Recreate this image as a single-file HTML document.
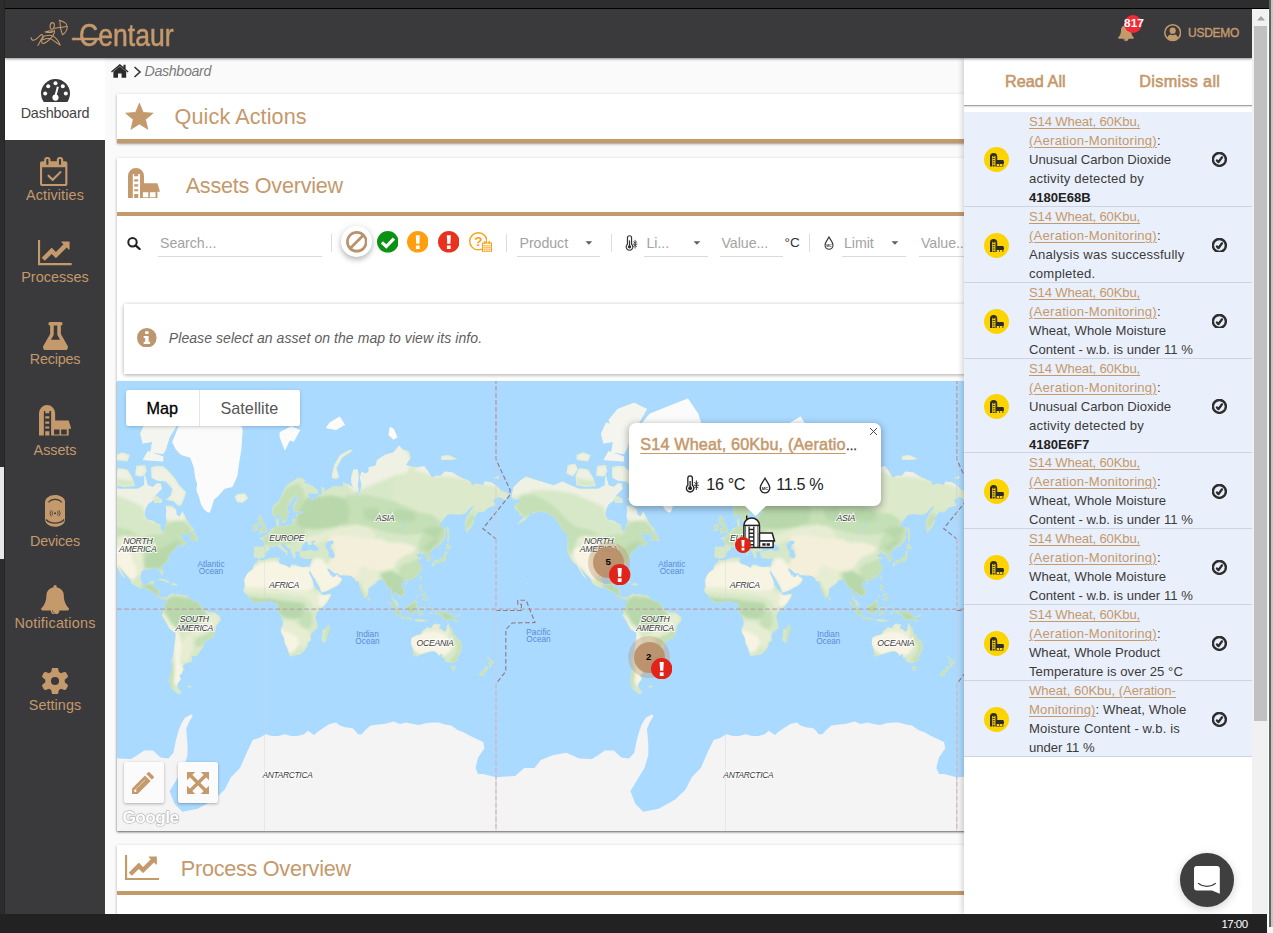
<!DOCTYPE html><html><head><meta charset="utf-8"><title>Centaur Dashboard</title><style>
*{box-sizing:border-box}
html,body{margin:0;padding:0}
body{width:1273px;height:933px;overflow:hidden;position:relative;background:#fafafa;font-family:"Liberation Sans",sans-serif;color:#333}
.a{position:absolute}
.t{position:absolute;white-space:nowrap;line-height:1;transform-origin:0 0}
.tan{color:#c4996c}
.card{position:absolute;background:#fff;box-shadow:0 1px 3px rgba(0,0,0,.28),0 1px 1px rgba(0,0,0,.12)}
.bar{position:absolute;left:0;right:0;bottom:0;height:4px;background:#c4996c}
.sb{position:absolute;left:0;width:100px;text-align:center;font-size:14.4px;color:#c4996c;line-height:1;letter-spacing:-.1px}
.ul{position:absolute;height:1px;background:#dadada}
.sep{position:absolute;width:1px;background:#dcdcdc}
.ph{color:#a3a3a3}
.n{position:absolute;left:0;width:288.5px;background:#eaf0fb;border-bottom:1px solid #cdd3df}
.n .tx{position:absolute;left:65.5px;top:0;width:175px;font-size:13.1px;line-height:19px;color:#3a3a3a;letter-spacing:.12px;white-space:nowrap}
.n .tx u{color:#c4996c;text-decoration:underline;text-decoration-thickness:1px;text-underline-offset:2px}
.n .tx b{font-weight:700;color:#222}
.yc{position:absolute;left:20.5px;width:25px;height:25px;border-radius:50%;background:#fdd400}
</style></head><body>
<div class="a" style="left:105px;top:58px;width:860px;height:856px;background:#fafafa"></div>
<svg class="a" style="left:111.3px;top:64px" width="17.6" height="14" viewBox="0 0 17.6 14"><path fill="#2b2b2b" d="M8.8 2.2 15.2 7.6V13.3a.5.5 0 0 1-.5.5H10.600V9.600H7V13.800H2.900a.5.5 0 0 1-.5-.5V7.600z"/><path fill="#2b2b2b" d="M8.800 0 12.500 3.100V.8h2.100V4.900L17.600 7.400l-.9 1.100L8.800 1.900.9 8.500 0 7.400z"/></svg>
<svg class="a" style="left:133px;top:66px" width="9" height="12" viewBox="0 0 9 12"><path d="M1.5 1 L7 6 L1.5 11" fill="none" stroke="#333" stroke-width="1.6"/></svg>
<div class="t" style="left:144.5px;top:64.4px;font-size:14.2px;font-style:italic;color:#7b7b7b;letter-spacing:-.32px">Dashboard</div>
<div class="card" style="left:117px;top:94px;width:900px;height:49px"><div class="bar"></div></div>
<svg class="a" style="left:124.5px;top:101.5px" width="29" height="28" viewBox="0 0 29 28"><polygon fill="#c4996c" stroke="#c4996c" stroke-width=".8" stroke-linejoin="round" points="14.40,1.20 18.17,10.42 28.10,11.15 20.49,17.58 22.86,27.25 14.40,22.01 5.94,27.25 8.31,17.58 0.70,11.15 10.63,10.42"/></svg>
<div class="t tan" style="left:174.6px;top:106.3px;font-size:21.6px;letter-spacing:.1px">Quick Actions</div>
<div class="card" style="left:117px;top:158px;width:900px;height:673px"></div>
<div class="a" style="left:117px;top:212px;width:900px;height:4px;background:#c4996c"></div>
<svg class="a" style="left:128px;top:168px;" width="32" height="30.3" viewBox="0 0 32 30" preserveAspectRatio="none"><path fill="#c4996c" d="M0 30V8a8 8 0 0 1 16 0v7.2h13.4L32 23.4h-2.6V30H12V6H10.2v2.2H6.2V6H4.8v24z M6.2 11.1h4v2.2h-4z M6.2 16.2h4v2.1h-4z M6.2 21h4v2.1h-4z M6.2 25.8h4V30h-4z"/><path fill="#fff" d="M14.9 24.1h5.4v4.8h-5.4z M21.9 24.1h5.6v4.8h-5.6z"/></svg>
<div class="t tan" style="left:185.7px;top:174.5px;font-size:21.6px;letter-spacing:-.24px">Assets Overview</div>
<svg class="a" style="left:127.3px;top:236.6px" width="14" height="13" viewBox="0 0 14 13"><circle cx="5.5" cy="5.300" r="4.200" fill="none" stroke="#222" stroke-width="2"/><path d="M8.600 8.300 12.600 12" stroke="#222" stroke-width="2.300" stroke-linecap="round"/></svg>
<div class="t ph" style="left:160px;top:235.9px;font-size:14.2px;letter-spacing:-.05px">Search...</div>
<div class="ul" style="left:158px;top:256px;width:164px"></div>
<div class="sep" style="left:331px;top:234px;height:18px"></div>
<div class="a" style="left:341px;top:226.2px;width:30.6px;height:30.6px;border-radius:50%;background:#fff;box-shadow:0 3px 5px rgba(0,0,0,.2),0 1px 8px rgba(0,0,0,.12)"></div>
<svg class="a" style="left:345.6px;top:231px" width="21.6" height="21.6" viewBox="0 0 21.6 21.6"><circle cx="10.8" cy="10.8" r="9.4" fill="none" stroke="#b9926c" stroke-width="2.7"/><path d="M17.3 4.3 4.3 17.3" stroke="#b9926c" stroke-width="2.7"/></svg>
<svg class="a" style="left:376.6px;top:231px" width="21.6" height="21.6" viewBox="0 0 21.6 21.6"><circle cx="10.8" cy="10.8" r="10.8" fill="#0b9212"/><path d="M4.9 11.300 9.300 15.500 16.900 7.600" fill="none" stroke="#fff" stroke-width="3.1"/></svg>
<svg class="a" style="left:406.8px;top:231px" width="21.6" height="21.6" viewBox="0 0 21.6 21.6"><circle cx="10.8" cy="10.8" r="10.8" fill="#ff9e0f"/><path d="M8.8 4.2h4l-.4 8.600H9.200z M8.900 14.400h3.800v3.500H8.900z" fill="#fff"/></svg>
<svg class="a" style="left:437.6px;top:231px" width="21.6" height="21.6" viewBox="0 0 21.6 21.6"><circle cx="10.8" cy="10.8" r="10.8" fill="#e8321e"/><path d="M8.8 4.2h4l-.4 8.600H9.200z M8.900 14.400h3.800v3.500H8.900z" fill="#fff"/></svg>
<svg class="a" style="left:468.7px;top:232.200px" width="18.600" height="18.600" viewBox="0 0 18.600 18.600"><circle cx="9.300" cy="9.300" r="8.600" fill="none" stroke="#ff9e0f" stroke-width="1.400"/><text x="9.300" y="14.200" text-anchor="middle" font-family="Liberation Sans, sans-serif" font-weight="700" font-size="13.500" fill="#ff9e0f">?</text></svg>
<svg class="a" style="left:482.3px;top:240.500px" width="10" height="11.400" viewBox="0 0 10 11.400"><rect x=".5" y="2" width="9" height="8.900" fill="#fff" stroke="#ff9e0f" stroke-width="1"/><path d="M.5 4.600h9M.5 6.700h9M.5 8.800h9M2.800 4.600v6.300M5 4.600v6.300M7.200 4.600v6.300" stroke="#ff9e0f" stroke-width=".6" fill="none"/><path d="M2.800 0v3M7.200 0v3" stroke="#ff9e0f" stroke-width="1.300"/></svg>
<div class="sep" style="left:506px;top:234px;height:18px"></div>
<div class="t ph" style="left:519.5px;top:235.9px;font-size:14.2px;letter-spacing:-.05px">Product</div>
<div class="ul" style="left:517px;top:256px;width:83px"></div>
<svg class="a" style="left:585.1px;top:240.8px" width="7.8" height="4.2" viewBox="0 0 9 5"><path d="M0.5 0.3h8L4.5 4.6z" fill="#5f5f5f"/></svg>
<div class="sep" style="left:611px;top:234px;height:18px"></div>
<svg class="a" style="left:624px;top:234.5px" width="14.040000000000001" height="16.200000000000003" viewBox="0 0 13 15"><g fill="none" stroke="#333" stroke-width="1.1"><path d="M3.2 8.6V2.6a1.9 1.9 0 0 1 3.8 0v6a3.1 3.1 0 1 1-3.8 0z"/><path d="M10.3 4.5v8M8.6 6.2l1.7 1.2 1.7-1.2M8.6 10.8l1.7-1.2 1.7 1.2M8.2 8.5h4.2" stroke-width=".8"/></g><circle cx="5.1" cy="11" r="1.6" fill="#333"/><path d="M5.1 5v6" stroke="#333" stroke-width="1.1"/></svg>
<div class="t ph" style="left:646.5px;top:235.9px;font-size:14.2px;letter-spacing:-.05px">Li...</div>
<div class="ul" style="left:644px;top:256px;width:64px"></div>
<svg class="a" style="left:692.6px;top:240.8px" width="7.8" height="4.2" viewBox="0 0 9 5"><path d="M0.5 0.3h8L4.5 4.6z" fill="#5f5f5f"/></svg>
<div class="t ph" style="left:721.5px;top:235.9px;font-size:14.2px;letter-spacing:-.05px">Value...</div>
<div class="ul" style="left:720px;top:256px;width:63px"></div>
<div class="t" style="left:784.6px;top:236px;font-size:13.6px;color:#333">°C</div>
<div class="sep" style="left:809px;top:234px;height:18px"></div>
<svg class="a" style="left:824px;top:236px" width="10.0" height="14.0" viewBox="0 0 10 14"><path d="M5 1C3.4 4 1 6.6 1 9.2a4 4 0 0 0 8 0C9 6.6 6.6 4 5 1z" fill="none" stroke="#333" stroke-width="1.1"/><text x="5" y="11" font-size="3.6" font-family="Liberation Sans, sans-serif" font-weight="700" text-anchor="middle" fill="#333">MC</text></svg>
<div class="t ph" style="left:844px;top:235.9px;font-size:14.2px;letter-spacing:-.05px">Limit</div>
<div class="ul" style="left:842px;top:256px;width:64px"></div>
<svg class="a" style="left:890.6px;top:240.8px" width="7.8" height="4.2" viewBox="0 0 9 5"><path d="M0.5 0.3h8L4.5 4.6z" fill="#5f5f5f"/></svg>
<div class="t ph" style="left:921px;top:235.9px;font-size:14.2px;letter-spacing:-.05px">Value...</div>
<div class="ul" style="left:919px;top:256px;width:63px"></div>
<div class="card" style="left:124px;top:304px;width:880px;height:70px;box-shadow:0 1px 4px rgba(0,0,0,.35)"></div>
<svg class="a" style="left:137.4px;top:327.8px" width="19.6" height="19.6" viewBox="0 0 19.6 19.6"><circle cx="9.800" cy="9.800" r="9.800" fill="#bd966f"/><path fill="#fff" d="M8.200 3.300h3.300v2.700H8.200zM6.700 8h4.900v5.800h1.500v2.100H6.700v-2.100h1.500v-3.700H6.700z"/></svg>
<div class="t" style="left:168.8px;top:330.9px;font-size:14px;font-style:italic;color:#5e5e5e;letter-spacing:.07px">Please select an asset on the map to view its info.</div>
<div class="a" style="left:117px;top:381px;width:900px;height:450px;overflow:hidden;background:#aadaff;box-shadow:0 1px 2px rgba(0,0,0,.3)">
<svg class="a" style="left:0;top:0" width="900" height="450" viewBox="0 0 900 450">
<defs><clipPath id="landclip"><path d="M-66.4 115.8 L-64.5 106.6 L-57.5 99.4 L-51.7 95.5 L-43.4 98.6 L-31.9 102.0 L-24.2 104.2 L-15.2 100.5 L-11.4 102.4 L1.4 107.7 L10.4 107.7 L20.6 107.7 L27.0 104.2 L27.6 92.7 L30.8 104.2 L36.0 105.9 L39.8 102.4 L43.6 102.4 L44.9 107.7 L38.5 114.2 L37.2 118.8 L30.8 123.2 L28.3 128.6 L27.6 133.7 L30.2 138.6 L36.0 139.7 L39.8 142.5 L43.6 143.2 L43.6 147.5 L46.2 151.1 L47.5 149.6 L48.1 144.3 L50.0 140.9 L48.8 134.5 L49.4 129.9 L48.8 124.8 L54.5 124.8 L59.0 128.6 L59.6 133.7 L62.8 135.5 L65.4 130.4 L66.7 132.5 L69.2 137.4 L71.8 142.0 L76.3 147.5 L77.3 149.6 L71.8 153.3 L64.1 153.3 L61.6 155.6 L65.4 155.6 L66.0 159.5 L70.5 162.3 L64.8 165.8 L62.8 163.2 L59.0 165.5 L58.4 168.5 L53.9 171.0 L52.0 175.1 L51.3 179.9 L47.5 182.7 L44.7 185.3 L46.2 191.9 L45.9 194.5 L44.3 194.0 L42.7 190.4 L41.1 187.5 L38.5 187.1 L34.0 187.2 L33.4 189.0 L28.3 188.3 L24.4 190.4 L23.8 194.7 L23.5 198.2 L25.7 203.0 L27.6 204.1 L30.8 203.6 L32.8 201.0 L33.4 200.0 L37.2 199.6 L36.6 203.0 L35.6 207.0 L39.8 207.2 L42.0 208.4 L41.5 213.6 L43.6 216.2 L46.8 215.6 L49.7 216.8 L48.9 218.6 L46.2 218.4 L44.3 217.9 L42.4 217.1 L38.9 214.9 L36.6 211.0 L31.5 209.7 L27.6 206.8 L24.4 207.3 L19.3 205.4 L14.2 202.3 L13.6 198.9 L9.1 194.0 L4.6 189.0 L1.8 185.3 L2.7 187.5 L5.2 191.9 L7.8 196.1 L8.4 197.5 L7.4 197.1 L5.2 194.7 L2.7 191.2 L0.8 187.5 L-1.2 183.8 L-5.6 180.7 L-7.6 176.8 L-10.1 171.8 L-10.8 166.7 L-10.1 160.8 L-11.0 156.8 L-8.8 155.6 L-11.4 152.7 L-15.2 149.6 L-18.4 144.3 L-21.6 138.6 L-25.5 135.0 L-30.6 131.7 L-37.0 130.4 L-40.8 131.2 L-45.3 133.0 L-46.0 128.6 L-48.5 134.5 L-53.6 139.7 L-60.0 143.2 L-58.8 140.9 L-53.6 135.0 L-58.8 134.2 L-58.8 131.2 L-62.6 128.6 L-63.9 125.9 L-62.0 123.2 L-57.5 120.3 L-58.1 118.2 L-63.9 118.8Z M55.2 61.3 L61.6 45.3 L71.8 32.7 L91.0 24.9 L110.2 17.4 L120.4 32.7 L125.6 49.1 L124.3 68.5 L121.7 83.9 L120.4 94.7 L117.9 100.5 L115.3 105.9 L107.6 107.7 L101.2 114.9 L96.8 118.8 L94.8 125.9 L92.9 131.2 L91.0 131.5 L87.2 128.6 L84.0 123.2 L82.0 115.8 L79.5 109.4 L80.1 102.4 L78.2 96.7 L76.9 86.2 L73.1 76.6 L64.1 74.0 L59.0 68.5Z M46.2 85.3 L51.3 89.7 L57.7 96.7 L62.2 104.2 L69.2 111.0 L67.3 117.3 L64.1 124.6 L60.9 124.6 L56.4 120.3 L48.8 118.8 L53.9 114.2 L55.2 107.7 L48.8 100.5 L39.8 99.4 L34.7 96.7 L34.0 86.2 L39.8 84.8Z M33.4 71.3 L46.2 72.9 L48.8 68.5 L52.6 56.2 L61.6 41.4 L69.2 27.9 L56.4 21.8 L39.8 27.9 L30.8 38.9 L36.0 56.2Z M-1.2 104.2 L7.8 105.9 L18.0 104.9 L15.5 96.7 L10.4 88.4 L1.4 87.1 L-2.4 94.7Z M-11.4 92.7 L-5.0 95.5 L0.1 88.4 L-2.4 82.5 L-10.1 83.9Z M-1.2 79.1 L10.4 80.6 L12.9 74.0 L5.2 71.3 L-1.2 74.0Z M25.7 79.1 L46.2 80.6 L46.2 75.6 L30.8 70.2Z M18.0 94.7 L25.7 95.5 L29.6 90.6 L28.3 83.9 L19.3 84.8Z M25.7 62.6 L36.0 60.7 L37.2 45.3 L28.3 41.4 L23.2 52.7Z M37.2 121.7 L44.9 121.7 L44.9 118.8 L39.8 114.9 L37.2 117.3Z M72.7 158.2 L76.9 159.9 L80.8 159.9 L81.1 158.0 L79.7 154.7 L77.4 150.6 L75.3 152.1 L73.1 156.6Z M39.8 198.9 L43.6 197.4 L48.8 198.4 L53.6 201.4 L49.4 201.8 L48.8 200.7 L43.6 199.3Z M53.2 203.8 L56.4 201.8 L61.0 203.4 L57.7 204.8Z M117.5 115.8 L120.4 113.0 L128.1 112.6 L131.2 117.3 L125.6 122.0 L119.8 120.9Z M49.7 216.8 L52.0 213.9 L56.4 212.3 L57.1 213.6 L61.6 213.0 L66.7 214.3 L69.9 214.3 L71.8 216.9 L75.6 220.1 L82.0 221.4 L84.6 226.5 L87.2 229.1 L92.3 231.0 L97.4 231.6 L101.2 234.2 L103.8 236.8 L103.5 240.0 L99.3 244.6 L98.7 250.6 L96.1 256.7 L91.6 258.5 L87.2 261.6 L86.3 265.9 L82.0 271.8 L79.5 275.2 L75.6 275.2 L74.0 274.1 L75.6 278.0 L74.4 281.3 L69.2 282.1 L65.4 285.4 L66.7 288.0 L64.8 292.4 L62.2 294.3 L64.1 298.0 L60.3 302.9 L60.9 307.0 L64.8 311.8 L61.6 313.6 L57.7 310.2 L53.9 307.0 L52.0 300.0 L53.2 292.4 L55.2 287.1 L54.3 280.5 L56.4 272.6 L57.3 265.2 L58.6 253.9 L58.4 251.6 L52.6 247.9 L50.0 243.3 L46.8 237.4 L44.5 234.2 L46.2 231.6 L45.2 229.1 L46.2 226.5 L48.1 224.6 L49.4 222.0 L49.4 218.8Z M140.9 178.5 L146.0 179.6 L152.4 176.9 L160.1 176.4 L162.7 176.8 L161.7 181.0 L163.3 182.7 L167.8 183.9 L172.9 186.9 L174.2 183.8 L178.0 183.5 L180.6 185.0 L185.7 186.2 L189.9 185.6 L192.4 185.7 L193.1 188.3 L192.5 190.7 L191.6 190.4 L190.2 187.7 L192.1 191.9 L194.0 196.1 L196.0 200.3 L196.3 203.4 L199.2 207.7 L203.3 211.4 L204.0 212.8 L206.2 214.2 L211.3 213.2 L214.1 212.5 L213.6 215.6 L210.0 221.4 L207.5 224.6 L203.0 229.1 L200.1 231.6 L198.5 235.5 L199.2 239.4 L200.4 242.0 L200.6 247.2 L196.0 251.0 L193.4 253.9 L194.0 259.5 L190.8 261.6 L190.6 265.2 L187.6 269.6 L183.2 273.8 L176.8 274.4 L174.2 275.4 L172.0 274.4 L171.6 271.1 L169.7 265.9 L167.8 262.3 L167.0 256.7 L164.0 251.2 L163.7 247.9 L166.1 243.3 L165.5 239.4 L164.2 235.5 L163.7 233.6 L160.8 230.4 L160.1 227.2 L161.0 223.3 L159.5 222.0 L156.3 222.3 L154.1 219.7 L149.9 220.2 L146.0 221.6 L143.5 221.1 L139.0 222.3 L137.1 221.4 L133.9 219.1 L131.7 216.9 L131.3 215.3 L129.4 213.6 L127.2 211.8 L126.2 208.8 L127.5 206.4 L127.7 202.3 L126.8 200.3 L128.1 196.8 L130.0 193.3 L132.0 190.9 L135.8 188.3 L136.2 185.3 L137.7 182.6 L139.9 181.5Z M211.7 243.3 L213.0 247.9 L212.0 250.6 L210.0 256.7 L208.8 260.9 L206.2 261.6 L204.5 258.8 L205.3 253.9 L205.3 248.8 L208.1 247.9 L210.0 245.2Z M136.4 174.0 L137.3 170.2 L136.7 166.7 L138.4 165.5 L144.1 165.8 L146.3 166.0 L147.1 162.3 L145.4 158.9 L142.6 157.6 L142.8 156.4 L146.6 156.2 L146.4 154.5 L148.9 154.7 L150.6 152.7 L152.4 151.1 L154.0 149.6 L154.7 147.5 L157.6 146.4 L159.7 145.6 L159.2 142.0 L159.0 138.6 L162.0 136.9 L161.8 140.9 L162.4 145.4 L164.6 144.7 L166.5 145.4 L169.7 144.3 L172.3 143.8 L173.8 144.5 L175.5 142.5 L175.5 138.6 L177.4 136.9 L179.7 138.1 L179.3 135.5 L178.7 133.2 L181.9 132.5 L184.4 132.2 L187.0 131.2 L185.1 129.7 L180.6 130.7 L177.8 131.2 L175.9 128.6 L176.1 123.7 L180.6 117.3 L181.0 115.8 L176.8 115.2 L175.7 118.8 L171.0 125.1 L170.6 129.1 L172.7 131.7 L169.7 135.0 L169.5 139.7 L166.9 142.0 L165.2 142.3 L164.6 139.7 L162.7 134.2 L162.0 132.5 L159.2 135.7 L157.3 136.2 L155.3 133.0 L155.0 127.3 L157.6 123.2 L161.4 120.3 L164.6 114.2 L167.2 107.7 L171.0 103.1 L175.5 100.5 L180.6 96.7 L184.4 96.7 L188.3 99.4 L187.0 101.6 L190.8 102.7 L196.0 104.9 L201.1 109.4 L200.4 113.3 L193.4 112.6 L190.8 111.7 L193.1 117.3 L193.1 119.4 L196.6 120.6 L196.0 117.3 L199.8 118.5 L199.8 114.9 L204.3 113.6 L204.9 109.4 L204.3 105.9 L207.5 107.0 L208.1 111.0 L206.2 111.7 L210.0 108.7 L216.4 104.9 L221.6 105.6 L226.0 104.9 L226.0 101.3 L231.8 103.5 L236.3 106.6 L234.4 102.4 L234.1 96.7 L236.3 88.4 L240.8 88.4 L241.7 96.7 L240.8 104.2 L242.0 111.7 L237.6 112.6 L241.4 113.3 L243.3 109.4 L244.6 104.2 L242.9 96.7 L244.6 90.6 L248.4 92.7 L251.6 90.6 L251.6 86.2 L258.7 84.4 L260.0 79.1 L267.6 74.0 L276.6 71.3 L282.1 64.4 L285.6 68.5 L292.0 70.2 L293.9 76.6 L288.8 83.9 L293.2 85.3 L299.6 86.2 L307.3 85.3 L311.2 90.6 L315.0 96.7 L318.8 94.7 L324.0 94.7 L327.8 90.6 L335.5 91.4 L340.6 94.7 L344.4 96.7 L353.4 100.5 L354.7 104.2 L359.8 102.4 L366.2 104.2 L367.5 100.5 L373.9 101.3 L379.0 104.2 L384.1 109.4 L389.9 111.7 L392.2 114.2 L388.0 118.8 L381.6 115.8 L377.7 118.2 L375.8 118.2 L378.4 124.6 L371.3 126.5 L366.6 131.2 L361.1 131.2 L357.9 136.2 L356.0 136.7 L357.2 140.9 L356.0 143.6 L353.4 147.5 L349.6 151.7 L348.3 148.6 L347.9 140.9 L349.6 136.2 L353.4 129.9 L357.9 124.6 L353.4 126.7 L348.3 132.5 L343.2 133.7 L335.5 133.0 L330.4 133.7 L325.2 139.7 L322.0 144.0 L325.2 145.8 L329.1 146.9 L328.2 151.7 L328.4 156.6 L325.6 160.4 L321.8 165.0 L317.6 166.7 L315.9 167.9 L314.4 170.2 L311.8 172.3 L314.1 176.8 L313.7 179.6 L310.5 180.9 L310.3 177.6 L308.2 175.1 L308.6 172.5 L304.1 173.5 L304.4 170.5 L300.9 173.2 L299.4 174.0 L300.9 176.3 L305.4 176.1 L302.2 178.7 L301.3 180.4 L303.2 183.6 L304.8 186.0 L304.1 189.0 L302.2 192.6 L299.0 196.1 L294.5 198.2 L290.7 199.6 L289.4 201.3 L287.5 199.3 L284.9 201.7 L283.9 203.3 L286.2 206.4 L288.4 210.4 L288.1 213.0 L285.6 214.4 L283.0 216.5 L282.7 214.7 L279.8 212.3 L277.9 211.3 L277.2 210.4 L276.6 212.3 L275.7 215.6 L277.2 218.8 L279.5 220.1 L281.1 222.7 L282.0 226.0 L280.8 225.9 L278.3 224.1 L277.0 220.7 L274.4 217.5 L274.9 214.3 L274.7 211.0 L273.7 207.0 L270.8 207.2 L269.3 206.4 L269.3 203.7 L266.4 199.6 L265.7 198.1 L262.5 199.2 L260.0 199.6 L259.3 201.7 L256.1 204.0 L252.9 206.6 L251.3 207.7 L251.3 211.0 L250.7 214.5 L249.7 215.8 L248.4 217.1 L247.5 217.4 L246.3 215.2 L244.6 211.7 L243.3 207.7 L242.0 203.7 L241.7 200.3 L240.8 200.3 L239.5 200.6 L237.2 198.5 L238.2 197.5 L235.9 196.6 L234.4 195.0 L231.2 194.5 L227.3 194.6 L222.2 193.9 L220.9 191.9 L218.4 192.5 L215.8 191.0 L213.6 189.0 L212.0 187.4 L210.0 187.5 L210.9 189.7 L212.6 192.3 L213.0 194.0 L213.9 194.7 L214.5 193.3 L214.8 195.7 L217.7 195.9 L220.3 193.3 L220.9 195.4 L223.7 196.8 L225.1 198.2 L223.5 201.3 L222.5 203.0 L219.4 205.3 L215.4 207.0 L211.3 209.4 L206.2 211.3 L204.3 211.4 L203.3 208.6 L202.4 205.7 L199.8 201.7 L198.5 198.9 L196.3 195.4 L193.4 190.4 L193.1 188.3 L192.5 185.6 L193.4 183.0 L194.7 179.1 L194.9 177.2 L192.1 177.9 L189.6 178.0 L187.6 177.6 L184.4 177.2 L183.5 176.0 L182.5 173.5 L182.3 171.8 L185.7 170.2 L188.9 169.8 L193.4 168.5 L197.2 170.2 L201.7 169.3 L201.1 166.7 L197.9 164.1 L196.0 162.8 L197.9 160.8 L198.5 159.1 L194.7 160.4 L193.4 161.9 L195.3 162.6 L194.0 163.9 L191.5 164.1 L190.5 162.1 L191.5 161.2 L188.3 160.2 L187.0 162.3 L185.3 165.0 L184.4 167.6 L184.4 169.3 L185.7 170.0 L183.2 170.7 L181.9 170.8 L179.3 170.5 L178.7 171.8 L177.7 171.2 L178.4 173.5 L179.3 174.8 L178.0 177.6 L177.1 177.4 L176.1 176.0 L175.5 173.5 L173.6 171.0 L173.6 168.8 L171.6 167.1 L169.1 165.8 L167.8 163.5 L166.0 162.8 L166.1 161.9 L164.3 162.6 L164.6 165.0 L166.1 165.8 L167.8 168.5 L169.1 168.8 L172.3 171.5 L170.4 171.0 L169.8 172.7 L170.6 173.5 L169.1 175.3 L168.7 174.8 L169.1 172.7 L168.4 171.8 L167.2 170.8 L164.6 169.3 L162.0 167.1 L161.4 165.0 L159.9 164.2 L158.2 165.3 L156.3 166.5 L153.7 165.8 L152.4 167.6 L152.7 168.8 L149.9 170.2 L148.2 172.7 L148.7 174.0 L147.7 175.8 L146.0 177.1 L142.8 177.2 L141.6 178.3 L140.5 177.1 L139.0 176.4 L137.1 176.8Z M141.3 153.7 L144.8 152.3 L150.3 151.3 L149.2 150.6 L150.8 148.1 L149.0 147.5 L148.3 144.3 L146.6 142.0 L144.8 140.9 L146.0 137.1 L143.5 137.1 L144.5 134.7 L142.2 134.7 L140.7 138.6 L141.9 142.0 L142.5 143.6 L144.5 143.4 L144.8 146.7 L142.8 147.1 L143.2 148.6 L141.9 150.0 L144.1 150.8Z M135.8 150.2 L140.5 149.2 L140.9 146.4 L141.6 144.0 L139.3 142.5 L135.8 144.9 L136.4 147.5Z M162.7 56.2 L167.8 69.6 L172.9 59.4 L176.8 60.7 L183.2 49.1 L174.2 45.3 L162.7 51.3Z M214.5 96.7 L219.0 97.9 L222.2 96.7 L219.6 87.1 L225.4 76.6 L236.3 69.6 L233.1 68.5 L222.8 74.0 L217.1 83.9 L215.2 92.7Z M271.5 54.1 L276.6 58.8 L280.4 56.2 L276.6 47.6 L272.8 46.1Z M208.8 46.9 L219.0 49.1 L228.0 43.8 L222.8 35.4 L212.6 41.4Z M324.0 79.1 L334.2 79.1 L340.6 78.1 L331.6 74.0 L324.0 75.0Z M377.1 96.7 L381.6 94.7 L381.6 97.5 L377.7 97.9Z M330.4 144.7 L332.0 149.6 L332.3 154.7 L331.6 160.4 L330.4 161.3 L330.4 155.6 L330.0 149.6Z M327.8 169.3 L329.1 166.7 L329.7 162.3 L332.3 164.6 L334.8 166.2 L331.6 168.5 L329.1 167.6Z M329.7 169.7 L330.4 172.7 L329.1 175.1 L329.1 178.3 L327.8 179.9 L326.1 180.4 L324.0 180.5 L322.3 182.2 L321.4 180.5 L318.2 181.2 L316.3 181.5 L316.3 180.7 L318.5 179.1 L322.0 179.0 L324.0 176.8 L325.9 176.3 L327.8 172.7 L327.8 170.8Z M315.0 182.2 L316.9 181.9 L317.6 183.0 L316.7 185.6 L315.3 185.7 L314.6 183.0Z M318.2 181.8 L320.8 181.2 L320.5 182.2 L318.8 183.3Z M303.5 194.5 L304.8 194.7 L303.5 198.9 L302.5 197.5Z M287.7 202.6 L290.0 201.7 L290.7 202.3 L288.8 204.1Z M302.8 203.7 L305.0 203.8 L304.8 207.0 L304.1 209.0 L307.3 211.0 L306.7 209.8 L303.1 210.0 L302.2 207.0Z M304.8 218.8 L306.7 216.9 L309.2 215.3 L310.5 218.2 L309.2 220.1 L307.3 219.5Z M304.8 213.0 L308.6 211.7 L309.2 213.6 L306.7 215.6 L304.8 214.3Z M298.6 216.9 L301.6 213.4 L301.9 214.2 L299.1 217.3Z M250.7 215.3 L252.5 216.9 L253.3 218.8 L251.9 220.1 L250.7 218.8Z M270.6 220.7 L273.4 221.1 L277.0 224.6 L281.1 229.1 L284.3 231.6 L284.0 235.2 L282.4 235.2 L279.2 232.9 L277.0 229.1 L274.9 225.6Z M283.3 236.5 L284.9 235.5 L287.5 236.4 L290.3 236.0 L292.9 236.7 L295.2 237.7 L295.0 239.0 L289.4 238.2 L284.9 237.3Z M288.1 225.9 L289.4 225.5 L291.1 224.6 L293.2 223.7 L295.8 221.4 L298.0 218.8 L299.3 219.8 L300.9 221.1 L299.6 222.3 L299.4 225.2 L300.9 226.5 L299.0 228.8 L297.7 231.0 L297.1 232.9 L295.2 232.9 L293.2 231.9 L291.3 231.9 L289.4 229.7 L288.1 227.8Z M301.9 227.2 L303.2 226.1 L306.7 226.6 L308.6 225.9 L308.0 227.3 L305.4 227.3 L302.8 227.8 L303.5 229.1 L306.4 229.0 L304.5 230.1 L305.8 232.9 L305.1 234.2 L304.1 233.8 L303.5 231.3 L302.6 231.6 L302.7 234.9 L301.6 234.9 L301.6 232.3 L300.7 231.3Z M316.3 228.8 L320.1 228.8 L321.4 232.0 L324.6 230.0 L329.1 231.1 L333.6 232.7 L335.5 234.9 L337.8 235.5 L336.8 236.8 L338.0 238.1 L341.2 240.9 L338.0 240.9 L335.5 238.7 L332.9 237.7 L331.6 239.4 L329.1 239.5 L326.5 238.1 L325.2 238.5 L326.3 236.8 L325.2 234.9 L322.0 233.6 L318.8 232.9 L318.6 231.6 L320.1 230.9 L317.6 230.6Z M297.1 238.5 L300.9 238.3 L306.0 238.3 L307.3 239.6 L311.2 238.6 L308.6 240.7 L302.2 240.7 L297.1 239.2Z M311.8 225.2 L313.1 225.9 L313.3 228.4 L311.8 227.8Z M312.4 231.6 L316.0 231.6 L315.6 232.7 L312.4 232.4Z M338.7 234.9 L343.2 233.2 L343.5 234.2 L340.6 235.9 L338.7 235.5Z M294.5 256.7 L293.9 262.3 L295.8 268.1 L296.7 271.1 L295.8 274.6 L299.6 275.7 L302.2 274.1 L307.3 272.6 L309.9 271.5 L313.7 270.5 L316.5 270.3 L320.1 272.1 L322.0 275.2 L322.7 274.1 L324.9 272.6 L325.2 274.4 L325.0 276.5 L327.2 276.9 L328.4 280.5 L332.3 281.8 L335.9 282.1 L337.8 280.5 L340.6 279.6 L341.0 276.5 L342.3 273.4 L343.8 271.1 L345.1 265.9 L344.7 261.6 L341.9 258.8 L340.0 257.1 L338.0 253.9 L335.9 252.6 L335.5 249.9 L334.6 247.2 L332.7 246.3 L332.3 243.9 L331.0 241.7 L330.0 244.6 L329.7 247.9 L328.8 250.6 L327.2 250.6 L324.6 248.6 L322.0 247.2 L322.7 245.2 L323.7 243.5 L321.4 243.3 L318.3 242.6 L316.3 243.7 L315.0 245.2 L314.4 247.2 L312.4 247.0 L310.5 245.9 L308.6 247.6 L307.3 249.2 L305.1 249.9 L305.0 251.9 L303.5 253.4 L300.9 253.9 L298.1 254.8Z M333.8 284.9 L338.3 285.1 L338.4 287.1 L336.8 289.9 L335.5 289.8 L334.5 287.5Z M369.7 274.7 L371.7 276.1 L373.2 278.0 L373.9 279.8 L377.0 280.0 L376.2 282.4 L375.0 282.9 L374.9 284.6 L372.9 286.5 L372.2 285.9 L372.6 283.8 L371.1 282.6 L372.2 280.5 L372.0 278.0 L370.0 275.7Z M369.7 284.6 L371.7 286.6 L370.0 288.9 L369.7 290.3 L367.7 291.2 L367.1 294.1 L364.9 295.4 L361.7 294.3 L363.0 292.1 L364.3 290.6 L366.8 288.7 L368.1 286.6Z M70.5 305.0 L74.4 304.5 L74.4 306.4 L71.2 306.6Z M-51.1 201.4 L-49.8 201.9 L-50.4 203.0 L-51.1 202.3Z"/></clipPath><filter id="b1" x="-5%" y="-5%" width="110%" height="110%"><feGaussianBlur stdDeviation="1.6"/></filter><g id="world"><path d="M-66.4 115.8 L-64.5 106.6 L-57.5 99.4 L-51.7 95.5 L-43.4 98.6 L-31.9 102.0 L-24.2 104.2 L-15.2 100.5 L-11.4 102.4 L1.4 107.7 L10.4 107.7 L20.6 107.7 L27.0 104.2 L27.6 92.7 L30.8 104.2 L36.0 105.9 L39.8 102.4 L43.6 102.4 L44.9 107.7 L38.5 114.2 L37.2 118.8 L30.8 123.2 L28.3 128.6 L27.6 133.7 L30.2 138.6 L36.0 139.7 L39.8 142.5 L43.6 143.2 L43.6 147.5 L46.2 151.1 L47.5 149.6 L48.1 144.3 L50.0 140.9 L48.8 134.5 L49.4 129.9 L48.8 124.8 L54.5 124.8 L59.0 128.6 L59.6 133.7 L62.8 135.5 L65.4 130.4 L66.7 132.5 L69.2 137.4 L71.8 142.0 L76.3 147.5 L77.3 149.6 L71.8 153.3 L64.1 153.3 L61.6 155.6 L65.4 155.6 L66.0 159.5 L70.5 162.3 L64.8 165.8 L62.8 163.2 L59.0 165.5 L58.4 168.5 L53.9 171.0 L52.0 175.1 L51.3 179.9 L47.5 182.7 L44.7 185.3 L46.2 191.9 L45.9 194.5 L44.3 194.0 L42.7 190.4 L41.1 187.5 L38.5 187.1 L34.0 187.2 L33.4 189.0 L28.3 188.3 L24.4 190.4 L23.8 194.7 L23.5 198.2 L25.7 203.0 L27.6 204.1 L30.8 203.6 L32.8 201.0 L33.4 200.0 L37.2 199.6 L36.6 203.0 L35.6 207.0 L39.8 207.2 L42.0 208.4 L41.5 213.6 L43.6 216.2 L46.8 215.6 L49.7 216.8 L48.9 218.6 L46.2 218.4 L44.3 217.9 L42.4 217.1 L38.9 214.9 L36.6 211.0 L31.5 209.7 L27.6 206.8 L24.4 207.3 L19.3 205.4 L14.2 202.3 L13.6 198.9 L9.1 194.0 L4.6 189.0 L1.8 185.3 L2.7 187.5 L5.2 191.9 L7.8 196.1 L8.4 197.5 L7.4 197.1 L5.2 194.7 L2.7 191.2 L0.8 187.5 L-1.2 183.8 L-5.6 180.7 L-7.6 176.8 L-10.1 171.8 L-10.8 166.7 L-10.1 160.8 L-11.0 156.8 L-8.8 155.6 L-11.4 152.7 L-15.2 149.6 L-18.4 144.3 L-21.6 138.6 L-25.5 135.0 L-30.6 131.7 L-37.0 130.4 L-40.8 131.2 L-45.3 133.0 L-46.0 128.6 L-48.5 134.5 L-53.6 139.7 L-60.0 143.2 L-58.8 140.9 L-53.6 135.0 L-58.8 134.2 L-58.8 131.2 L-62.6 128.6 L-63.9 125.9 L-62.0 123.2 L-57.5 120.3 L-58.1 118.2 L-63.9 118.8Z M55.2 61.3 L61.6 45.3 L71.8 32.7 L91.0 24.9 L110.2 17.4 L120.4 32.7 L125.6 49.1 L124.3 68.5 L121.7 83.9 L120.4 94.7 L117.9 100.5 L115.3 105.9 L107.6 107.7 L101.2 114.9 L96.8 118.8 L94.8 125.9 L92.9 131.2 L91.0 131.5 L87.2 128.6 L84.0 123.2 L82.0 115.8 L79.5 109.4 L80.1 102.4 L78.2 96.7 L76.9 86.2 L73.1 76.6 L64.1 74.0 L59.0 68.5Z M46.2 85.3 L51.3 89.7 L57.7 96.7 L62.2 104.2 L69.2 111.0 L67.3 117.3 L64.1 124.6 L60.9 124.6 L56.4 120.3 L48.8 118.8 L53.9 114.2 L55.2 107.7 L48.8 100.5 L39.8 99.4 L34.7 96.7 L34.0 86.2 L39.8 84.8Z M33.4 71.3 L46.2 72.9 L48.8 68.5 L52.6 56.2 L61.6 41.4 L69.2 27.9 L56.4 21.8 L39.8 27.9 L30.8 38.9 L36.0 56.2Z M-1.2 104.2 L7.8 105.9 L18.0 104.9 L15.5 96.7 L10.4 88.4 L1.4 87.1 L-2.4 94.7Z M-11.4 92.7 L-5.0 95.5 L0.1 88.4 L-2.4 82.5 L-10.1 83.9Z M-1.2 79.1 L10.4 80.6 L12.9 74.0 L5.2 71.3 L-1.2 74.0Z M25.7 79.1 L46.2 80.6 L46.2 75.6 L30.8 70.2Z M18.0 94.7 L25.7 95.5 L29.6 90.6 L28.3 83.9 L19.3 84.8Z M25.7 62.6 L36.0 60.7 L37.2 45.3 L28.3 41.4 L23.2 52.7Z M37.2 121.7 L44.9 121.7 L44.9 118.8 L39.8 114.9 L37.2 117.3Z M72.7 158.2 L76.9 159.9 L80.8 159.9 L81.1 158.0 L79.7 154.7 L77.4 150.6 L75.3 152.1 L73.1 156.6Z M39.8 198.9 L43.6 197.4 L48.8 198.4 L53.6 201.4 L49.4 201.8 L48.8 200.7 L43.6 199.3Z M53.2 203.8 L56.4 201.8 L61.0 203.4 L57.7 204.8Z M117.5 115.8 L120.4 113.0 L128.1 112.6 L131.2 117.3 L125.6 122.0 L119.8 120.9Z M49.7 216.8 L52.0 213.9 L56.4 212.3 L57.1 213.6 L61.6 213.0 L66.7 214.3 L69.9 214.3 L71.8 216.9 L75.6 220.1 L82.0 221.4 L84.6 226.5 L87.2 229.1 L92.3 231.0 L97.4 231.6 L101.2 234.2 L103.8 236.8 L103.5 240.0 L99.3 244.6 L98.7 250.6 L96.1 256.7 L91.6 258.5 L87.2 261.6 L86.3 265.9 L82.0 271.8 L79.5 275.2 L75.6 275.2 L74.0 274.1 L75.6 278.0 L74.4 281.3 L69.2 282.1 L65.4 285.4 L66.7 288.0 L64.8 292.4 L62.2 294.3 L64.1 298.0 L60.3 302.9 L60.9 307.0 L64.8 311.8 L61.6 313.6 L57.7 310.2 L53.9 307.0 L52.0 300.0 L53.2 292.4 L55.2 287.1 L54.3 280.5 L56.4 272.6 L57.3 265.2 L58.6 253.9 L58.4 251.6 L52.6 247.9 L50.0 243.3 L46.8 237.4 L44.5 234.2 L46.2 231.6 L45.2 229.1 L46.2 226.5 L48.1 224.6 L49.4 222.0 L49.4 218.8Z M140.9 178.5 L146.0 179.6 L152.4 176.9 L160.1 176.4 L162.7 176.8 L161.7 181.0 L163.3 182.7 L167.8 183.9 L172.9 186.9 L174.2 183.8 L178.0 183.5 L180.6 185.0 L185.7 186.2 L189.9 185.6 L192.4 185.7 L193.1 188.3 L192.5 190.7 L191.6 190.4 L190.2 187.7 L192.1 191.9 L194.0 196.1 L196.0 200.3 L196.3 203.4 L199.2 207.7 L203.3 211.4 L204.0 212.8 L206.2 214.2 L211.3 213.2 L214.1 212.5 L213.6 215.6 L210.0 221.4 L207.5 224.6 L203.0 229.1 L200.1 231.6 L198.5 235.5 L199.2 239.4 L200.4 242.0 L200.6 247.2 L196.0 251.0 L193.4 253.9 L194.0 259.5 L190.8 261.6 L190.6 265.2 L187.6 269.6 L183.2 273.8 L176.8 274.4 L174.2 275.4 L172.0 274.4 L171.6 271.1 L169.7 265.9 L167.8 262.3 L167.0 256.7 L164.0 251.2 L163.7 247.9 L166.1 243.3 L165.5 239.4 L164.2 235.5 L163.7 233.6 L160.8 230.4 L160.1 227.2 L161.0 223.3 L159.5 222.0 L156.3 222.3 L154.1 219.7 L149.9 220.2 L146.0 221.6 L143.5 221.1 L139.0 222.3 L137.1 221.4 L133.9 219.1 L131.7 216.9 L131.3 215.3 L129.4 213.6 L127.2 211.8 L126.2 208.8 L127.5 206.4 L127.7 202.3 L126.8 200.3 L128.1 196.8 L130.0 193.3 L132.0 190.9 L135.8 188.3 L136.2 185.3 L137.7 182.6 L139.9 181.5Z M211.7 243.3 L213.0 247.9 L212.0 250.6 L210.0 256.7 L208.8 260.9 L206.2 261.6 L204.5 258.8 L205.3 253.9 L205.3 248.8 L208.1 247.9 L210.0 245.2Z M136.4 174.0 L137.3 170.2 L136.7 166.7 L138.4 165.5 L144.1 165.8 L146.3 166.0 L147.1 162.3 L145.4 158.9 L142.6 157.6 L142.8 156.4 L146.6 156.2 L146.4 154.5 L148.9 154.7 L150.6 152.7 L152.4 151.1 L154.0 149.6 L154.7 147.5 L157.6 146.4 L159.7 145.6 L159.2 142.0 L159.0 138.6 L162.0 136.9 L161.8 140.9 L162.4 145.4 L164.6 144.7 L166.5 145.4 L169.7 144.3 L172.3 143.8 L173.8 144.5 L175.5 142.5 L175.5 138.6 L177.4 136.9 L179.7 138.1 L179.3 135.5 L178.7 133.2 L181.9 132.5 L184.4 132.2 L187.0 131.2 L185.1 129.7 L180.6 130.7 L177.8 131.2 L175.9 128.6 L176.1 123.7 L180.6 117.3 L181.0 115.8 L176.8 115.2 L175.7 118.8 L171.0 125.1 L170.6 129.1 L172.7 131.7 L169.7 135.0 L169.5 139.7 L166.9 142.0 L165.2 142.3 L164.6 139.7 L162.7 134.2 L162.0 132.5 L159.2 135.7 L157.3 136.2 L155.3 133.0 L155.0 127.3 L157.6 123.2 L161.4 120.3 L164.6 114.2 L167.2 107.7 L171.0 103.1 L175.5 100.5 L180.6 96.7 L184.4 96.7 L188.3 99.4 L187.0 101.6 L190.8 102.7 L196.0 104.9 L201.1 109.4 L200.4 113.3 L193.4 112.6 L190.8 111.7 L193.1 117.3 L193.1 119.4 L196.6 120.6 L196.0 117.3 L199.8 118.5 L199.8 114.9 L204.3 113.6 L204.9 109.4 L204.3 105.9 L207.5 107.0 L208.1 111.0 L206.2 111.7 L210.0 108.7 L216.4 104.9 L221.6 105.6 L226.0 104.9 L226.0 101.3 L231.8 103.5 L236.3 106.6 L234.4 102.4 L234.1 96.7 L236.3 88.4 L240.8 88.4 L241.7 96.7 L240.8 104.2 L242.0 111.7 L237.6 112.6 L241.4 113.3 L243.3 109.4 L244.6 104.2 L242.9 96.7 L244.6 90.6 L248.4 92.7 L251.6 90.6 L251.6 86.2 L258.7 84.4 L260.0 79.1 L267.6 74.0 L276.6 71.3 L282.1 64.4 L285.6 68.5 L292.0 70.2 L293.9 76.6 L288.8 83.9 L293.2 85.3 L299.6 86.2 L307.3 85.3 L311.2 90.6 L315.0 96.7 L318.8 94.7 L324.0 94.7 L327.8 90.6 L335.5 91.4 L340.6 94.7 L344.4 96.7 L353.4 100.5 L354.7 104.2 L359.8 102.4 L366.2 104.2 L367.5 100.5 L373.9 101.3 L379.0 104.2 L384.1 109.4 L389.9 111.7 L392.2 114.2 L388.0 118.8 L381.6 115.8 L377.7 118.2 L375.8 118.2 L378.4 124.6 L371.3 126.5 L366.6 131.2 L361.1 131.2 L357.9 136.2 L356.0 136.7 L357.2 140.9 L356.0 143.6 L353.4 147.5 L349.6 151.7 L348.3 148.6 L347.9 140.9 L349.6 136.2 L353.4 129.9 L357.9 124.6 L353.4 126.7 L348.3 132.5 L343.2 133.7 L335.5 133.0 L330.4 133.7 L325.2 139.7 L322.0 144.0 L325.2 145.8 L329.1 146.9 L328.2 151.7 L328.4 156.6 L325.6 160.4 L321.8 165.0 L317.6 166.7 L315.9 167.9 L314.4 170.2 L311.8 172.3 L314.1 176.8 L313.7 179.6 L310.5 180.9 L310.3 177.6 L308.2 175.1 L308.6 172.5 L304.1 173.5 L304.4 170.5 L300.9 173.2 L299.4 174.0 L300.9 176.3 L305.4 176.1 L302.2 178.7 L301.3 180.4 L303.2 183.6 L304.8 186.0 L304.1 189.0 L302.2 192.6 L299.0 196.1 L294.5 198.2 L290.7 199.6 L289.4 201.3 L287.5 199.3 L284.9 201.7 L283.9 203.3 L286.2 206.4 L288.4 210.4 L288.1 213.0 L285.6 214.4 L283.0 216.5 L282.7 214.7 L279.8 212.3 L277.9 211.3 L277.2 210.4 L276.6 212.3 L275.7 215.6 L277.2 218.8 L279.5 220.1 L281.1 222.7 L282.0 226.0 L280.8 225.9 L278.3 224.1 L277.0 220.7 L274.4 217.5 L274.9 214.3 L274.7 211.0 L273.7 207.0 L270.8 207.2 L269.3 206.4 L269.3 203.7 L266.4 199.6 L265.7 198.1 L262.5 199.2 L260.0 199.6 L259.3 201.7 L256.1 204.0 L252.9 206.6 L251.3 207.7 L251.3 211.0 L250.7 214.5 L249.7 215.8 L248.4 217.1 L247.5 217.4 L246.3 215.2 L244.6 211.7 L243.3 207.7 L242.0 203.7 L241.7 200.3 L240.8 200.3 L239.5 200.6 L237.2 198.5 L238.2 197.5 L235.9 196.6 L234.4 195.0 L231.2 194.5 L227.3 194.6 L222.2 193.9 L220.9 191.9 L218.4 192.5 L215.8 191.0 L213.6 189.0 L212.0 187.4 L210.0 187.5 L210.9 189.7 L212.6 192.3 L213.0 194.0 L213.9 194.7 L214.5 193.3 L214.8 195.7 L217.7 195.9 L220.3 193.3 L220.9 195.4 L223.7 196.8 L225.1 198.2 L223.5 201.3 L222.5 203.0 L219.4 205.3 L215.4 207.0 L211.3 209.4 L206.2 211.3 L204.3 211.4 L203.3 208.6 L202.4 205.7 L199.8 201.7 L198.5 198.9 L196.3 195.4 L193.4 190.4 L193.1 188.3 L192.5 185.6 L193.4 183.0 L194.7 179.1 L194.9 177.2 L192.1 177.9 L189.6 178.0 L187.6 177.6 L184.4 177.2 L183.5 176.0 L182.5 173.5 L182.3 171.8 L185.7 170.2 L188.9 169.8 L193.4 168.5 L197.2 170.2 L201.7 169.3 L201.1 166.7 L197.9 164.1 L196.0 162.8 L197.9 160.8 L198.5 159.1 L194.7 160.4 L193.4 161.9 L195.3 162.6 L194.0 163.9 L191.5 164.1 L190.5 162.1 L191.5 161.2 L188.3 160.2 L187.0 162.3 L185.3 165.0 L184.4 167.6 L184.4 169.3 L185.7 170.0 L183.2 170.7 L181.9 170.8 L179.3 170.5 L178.7 171.8 L177.7 171.2 L178.4 173.5 L179.3 174.8 L178.0 177.6 L177.1 177.4 L176.1 176.0 L175.5 173.5 L173.6 171.0 L173.6 168.8 L171.6 167.1 L169.1 165.8 L167.8 163.5 L166.0 162.8 L166.1 161.9 L164.3 162.6 L164.6 165.0 L166.1 165.8 L167.8 168.5 L169.1 168.8 L172.3 171.5 L170.4 171.0 L169.8 172.7 L170.6 173.5 L169.1 175.3 L168.7 174.8 L169.1 172.7 L168.4 171.8 L167.2 170.8 L164.6 169.3 L162.0 167.1 L161.4 165.0 L159.9 164.2 L158.2 165.3 L156.3 166.5 L153.7 165.8 L152.4 167.6 L152.7 168.8 L149.9 170.2 L148.2 172.7 L148.7 174.0 L147.7 175.8 L146.0 177.1 L142.8 177.2 L141.6 178.3 L140.5 177.1 L139.0 176.4 L137.1 176.8Z M141.3 153.7 L144.8 152.3 L150.3 151.3 L149.2 150.6 L150.8 148.1 L149.0 147.5 L148.3 144.3 L146.6 142.0 L144.8 140.9 L146.0 137.1 L143.5 137.1 L144.5 134.7 L142.2 134.7 L140.7 138.6 L141.9 142.0 L142.5 143.6 L144.5 143.4 L144.8 146.7 L142.8 147.1 L143.2 148.6 L141.9 150.0 L144.1 150.8Z M135.8 150.2 L140.5 149.2 L140.9 146.4 L141.6 144.0 L139.3 142.5 L135.8 144.9 L136.4 147.5Z M162.7 56.2 L167.8 69.6 L172.9 59.4 L176.8 60.7 L183.2 49.1 L174.2 45.3 L162.7 51.3Z M214.5 96.7 L219.0 97.9 L222.2 96.7 L219.6 87.1 L225.4 76.6 L236.3 69.6 L233.1 68.5 L222.8 74.0 L217.1 83.9 L215.2 92.7Z M271.5 54.1 L276.6 58.8 L280.4 56.2 L276.6 47.6 L272.8 46.1Z M208.8 46.9 L219.0 49.1 L228.0 43.8 L222.8 35.4 L212.6 41.4Z M324.0 79.1 L334.2 79.1 L340.6 78.1 L331.6 74.0 L324.0 75.0Z M377.1 96.7 L381.6 94.7 L381.6 97.5 L377.7 97.9Z M330.4 144.7 L332.0 149.6 L332.3 154.7 L331.6 160.4 L330.4 161.3 L330.4 155.6 L330.0 149.6Z M327.8 169.3 L329.1 166.7 L329.7 162.3 L332.3 164.6 L334.8 166.2 L331.6 168.5 L329.1 167.6Z M329.7 169.7 L330.4 172.7 L329.1 175.1 L329.1 178.3 L327.8 179.9 L326.1 180.4 L324.0 180.5 L322.3 182.2 L321.4 180.5 L318.2 181.2 L316.3 181.5 L316.3 180.7 L318.5 179.1 L322.0 179.0 L324.0 176.8 L325.9 176.3 L327.8 172.7 L327.8 170.8Z M315.0 182.2 L316.9 181.9 L317.6 183.0 L316.7 185.6 L315.3 185.7 L314.6 183.0Z M318.2 181.8 L320.8 181.2 L320.5 182.2 L318.8 183.3Z M303.5 194.5 L304.8 194.7 L303.5 198.9 L302.5 197.5Z M287.7 202.6 L290.0 201.7 L290.7 202.3 L288.8 204.1Z M302.8 203.7 L305.0 203.8 L304.8 207.0 L304.1 209.0 L307.3 211.0 L306.7 209.8 L303.1 210.0 L302.2 207.0Z M304.8 218.8 L306.7 216.9 L309.2 215.3 L310.5 218.2 L309.2 220.1 L307.3 219.5Z M304.8 213.0 L308.6 211.7 L309.2 213.6 L306.7 215.6 L304.8 214.3Z M298.6 216.9 L301.6 213.4 L301.9 214.2 L299.1 217.3Z M250.7 215.3 L252.5 216.9 L253.3 218.8 L251.9 220.1 L250.7 218.8Z M270.6 220.7 L273.4 221.1 L277.0 224.6 L281.1 229.1 L284.3 231.6 L284.0 235.2 L282.4 235.2 L279.2 232.9 L277.0 229.1 L274.9 225.6Z M283.3 236.5 L284.9 235.5 L287.5 236.4 L290.3 236.0 L292.9 236.7 L295.2 237.7 L295.0 239.0 L289.4 238.2 L284.9 237.3Z M288.1 225.9 L289.4 225.5 L291.1 224.6 L293.2 223.7 L295.8 221.4 L298.0 218.8 L299.3 219.8 L300.9 221.1 L299.6 222.3 L299.4 225.2 L300.9 226.5 L299.0 228.8 L297.7 231.0 L297.1 232.9 L295.2 232.9 L293.2 231.9 L291.3 231.9 L289.4 229.7 L288.1 227.8Z M301.9 227.2 L303.2 226.1 L306.7 226.6 L308.6 225.9 L308.0 227.3 L305.4 227.3 L302.8 227.8 L303.5 229.1 L306.4 229.0 L304.5 230.1 L305.8 232.9 L305.1 234.2 L304.1 233.8 L303.5 231.3 L302.6 231.6 L302.7 234.9 L301.6 234.9 L301.6 232.3 L300.7 231.3Z M316.3 228.8 L320.1 228.8 L321.4 232.0 L324.6 230.0 L329.1 231.1 L333.6 232.7 L335.5 234.9 L337.8 235.5 L336.8 236.8 L338.0 238.1 L341.2 240.9 L338.0 240.9 L335.5 238.7 L332.9 237.7 L331.6 239.4 L329.1 239.5 L326.5 238.1 L325.2 238.5 L326.3 236.8 L325.2 234.9 L322.0 233.6 L318.8 232.9 L318.6 231.6 L320.1 230.9 L317.6 230.6Z M297.1 238.5 L300.9 238.3 L306.0 238.3 L307.3 239.6 L311.2 238.6 L308.6 240.7 L302.2 240.7 L297.1 239.2Z M311.8 225.2 L313.1 225.9 L313.3 228.4 L311.8 227.8Z M312.4 231.6 L316.0 231.6 L315.6 232.7 L312.4 232.4Z M338.7 234.9 L343.2 233.2 L343.5 234.2 L340.6 235.9 L338.7 235.5Z M294.5 256.7 L293.9 262.3 L295.8 268.1 L296.7 271.1 L295.8 274.6 L299.6 275.7 L302.2 274.1 L307.3 272.6 L309.9 271.5 L313.7 270.5 L316.5 270.3 L320.1 272.1 L322.0 275.2 L322.7 274.1 L324.9 272.6 L325.2 274.4 L325.0 276.5 L327.2 276.9 L328.4 280.5 L332.3 281.8 L335.9 282.1 L337.8 280.5 L340.6 279.6 L341.0 276.5 L342.3 273.4 L343.8 271.1 L345.1 265.9 L344.7 261.6 L341.9 258.8 L340.0 257.1 L338.0 253.9 L335.9 252.6 L335.5 249.9 L334.6 247.2 L332.7 246.3 L332.3 243.9 L331.0 241.7 L330.0 244.6 L329.7 247.9 L328.8 250.6 L327.2 250.6 L324.6 248.6 L322.0 247.2 L322.7 245.2 L323.7 243.5 L321.4 243.3 L318.3 242.6 L316.3 243.7 L315.0 245.2 L314.4 247.2 L312.4 247.0 L310.5 245.9 L308.6 247.6 L307.3 249.2 L305.1 249.9 L305.0 251.9 L303.5 253.4 L300.9 253.9 L298.1 254.8Z M333.8 284.9 L338.3 285.1 L338.4 287.1 L336.8 289.9 L335.5 289.8 L334.5 287.5Z M369.7 274.7 L371.7 276.1 L373.2 278.0 L373.9 279.8 L377.0 280.0 L376.2 282.4 L375.0 282.9 L374.9 284.6 L372.9 286.5 L372.2 285.9 L372.6 283.8 L371.1 282.6 L372.2 280.5 L372.0 278.0 L370.0 275.7Z M369.7 284.6 L371.7 286.6 L370.0 288.9 L369.7 290.3 L367.7 291.2 L367.1 294.1 L364.9 295.4 L361.7 294.3 L363.0 292.1 L364.3 290.6 L366.8 288.7 L368.1 286.6Z M70.5 305.0 L74.4 304.5 L74.4 306.4 L71.2 306.6Z M-51.1 201.4 L-49.8 201.9 L-50.4 203.0 L-51.1 202.3Z" fill="#d7e8c8"/><g clip-path="url(#landclip)"><g filter="url(#b1)"><path d="M126.8 205.7 L138.4 206.4 L148.6 206.4 L158.8 207.0 L167.8 208.4 L176.8 209.7 L187.0 209.7 L194.7 208.4 L199.8 212.3 L202.4 217.5 L201.1 224.0 L197.2 230.4 L194.7 221.4 L187.0 216.2 L176.8 214.9 L167.8 213.6 L158.8 213.0 L148.6 212.3 L138.4 211.7 L126.8 211.0Z M235.6 196.8 L240.8 194.7 L242.0 187.5 L245.9 184.5 L251.0 187.5 L261.2 191.2 L261.2 198.9 L257.4 203.0 L251.0 208.4 L248.4 214.9 L246.5 212.3 L245.2 207.0 L243.3 201.7 L239.5 200.3Z M181.9 157.6 L189.6 155.6 L199.8 153.7 L212.6 149.6 L225.4 145.4 L238.2 143.2 L251.0 145.4 L258.7 153.7 L257.4 157.6 L248.4 157.6 L238.2 155.6 L228.0 153.7 L215.2 153.7 L207.5 159.5 L199.8 163.2 L187.0 163.2Z M12.9 171.8 L7.8 166.7 L1.4 165.0 L0.1 156.6 L5.2 154.7 L20.6 155.6 L25.7 157.6 L25.7 171.8 L27.0 189.0 L23.2 193.3 L19.3 194.7 L19.3 187.5 L15.5 179.9Z M293.2 256.7 L299.6 254.3 L306.0 251.9 L312.4 250.6 L318.8 250.6 L325.2 252.6 L330.4 255.3 L334.2 252.6 L332.3 246.6 L329.7 243.3 L329.1 248.6 L324.0 247.9 L323.3 243.3 L316.3 242.6 L313.7 246.6 L308.6 245.9 L304.8 250.6 L299.6 253.9Z M193.4 253.9 L190.8 248.6 L184.4 245.9 L176.8 240.7 L166.5 239.4 L164.0 245.9 L167.8 249.9 L174.2 252.6 L180.6 256.7 L181.9 263.7 L187.0 268.1 L190.2 262.3 L194.0 259.5Z M69.2 253.9 L74.4 253.9 L76.9 263.7 L74.4 274.1 L69.2 282.1 L64.1 280.5 L64.1 271.1 L64.1 262.3Z M84.6 240.7 L89.7 235.5 L97.4 232.3 L102.5 235.5 L100.0 243.3 L94.8 248.6 L89.7 252.6 L79.5 256.7 L74.4 253.9 L71.8 247.2 L79.5 244.6Z" fill="#e7edd2"/><path d="M289.4 125.9 L302.2 131.2 L315.0 133.7 L324.0 140.9 L330.4 133.7 L343.2 133.7 L353.4 127.3 L366.2 129.9 L379.0 124.6 L394.4 123.2 L394.4 107.7 L379.0 100.5 L353.4 96.7 L327.8 86.2 L308.6 83.9 L295.8 83.9 L289.4 96.7 L276.6 100.5 L276.6 120.3Z" fill="#dde9cb"/><path d="M-67.7 117.3 L-66.4 104.2 L-56.2 94.7 L-30.6 98.6 L-5.0 96.7 L20.6 100.5 L29.6 88.4 L46.2 100.5 L47.5 117.3 L50.0 131.2 L50.0 139.7 L39.8 142.0 L29.6 137.4 L25.7 125.9 L14.2 120.3 L-5.0 112.6 L-24.2 109.4 L-43.4 109.4 L-56.2 113.6Z M47.5 123.7 L59.0 127.3 L66.7 129.9 L69.2 138.6 L59.0 140.9 L48.8 138.6Z M46.2 85.3 L51.3 89.7 L57.7 96.7 L62.2 104.2 L69.2 111.0 L67.3 117.3 L64.1 124.6 L60.9 124.6 L56.4 120.3 L48.8 118.8 L53.9 114.2 L55.2 107.7 L48.8 100.5 L39.8 99.4 L34.7 96.7 L34.0 86.2 L39.8 84.8Z M33.4 71.3 L46.2 72.9 L48.8 68.5 L52.6 56.2 L61.6 41.4 L69.2 27.9 L56.4 21.8 L39.8 27.9 L30.8 38.9 L36.0 56.2Z M-1.2 104.2 L7.8 105.9 L18.0 104.9 L15.5 96.7 L10.4 88.4 L1.4 87.1 L-2.4 94.7Z M-11.4 92.7 L-5.0 95.5 L0.1 88.4 L-2.4 82.5 L-10.1 83.9Z M-1.2 79.1 L10.4 80.6 L12.9 74.0 L5.2 71.3 L-1.2 74.0Z M25.7 79.1 L46.2 80.6 L46.2 75.6 L30.8 70.2Z M18.0 94.7 L25.7 95.5 L29.6 90.6 L28.3 83.9 L19.3 84.8Z M25.7 62.6 L36.0 60.7 L37.2 45.3 L28.3 41.4 L23.2 52.7Z M37.2 121.7 L44.9 121.7 L44.9 118.8 L39.8 114.9 L37.2 117.3Z M214.5 96.7 L219.0 97.9 L222.2 96.7 L219.6 87.1 L225.4 76.6 L236.3 69.6 L233.1 68.5 L222.8 74.0 L217.1 83.9 L215.2 92.7Z M324.0 79.1 L334.2 79.1 L340.6 78.1 L331.6 74.0 L324.0 75.0Z M377.1 96.7 L381.6 94.7 L381.6 97.5 L377.7 97.9Z M117.5 115.8 L120.4 113.0 L128.1 112.6 L131.2 117.3 L125.6 122.0 L119.8 120.9Z M156.3 133.7 L158.8 128.6 L164.0 120.3 L167.8 111.0 L171.6 105.9 L174.2 104.2 L170.4 114.2 L166.5 121.7 L162.7 128.6 L158.8 133.7Z M233.1 107.7 L238.2 111.0 L251.0 105.9 L263.8 100.5 L276.6 94.7 L289.4 92.7 L295.8 81.5 L283.0 59.4 L263.8 71.3 L251.0 83.9 L235.6 83.9 L230.5 100.5Z M295.8 88.4 L315.0 94.7 L340.6 96.7 L366.2 102.4 L385.4 107.7 L394.4 112.6 L394.4 107.7 L379.0 100.5 L353.4 94.7 L327.8 86.2 L308.6 81.5Z" fill="#eef1e3"/><path d="M94.8 248.6 L98.7 251.2 L96.1 258.1 L87.2 262.3 L82.0 266.6 L76.9 263.7 L79.5 256.7 L89.7 252.6Z M187.0 231.6 L192.1 229.1 L194.7 234.2 L194.7 243.3 L190.8 248.6 L184.4 245.9 L181.9 240.7Z M211.3 243.3 L213.2 248.6 L211.3 253.9 L209.4 260.9 L208.1 258.1 L209.4 251.2 L210.0 245.9Z M329.7 169.7 L330.4 172.7 L329.1 175.1 L329.1 178.3 L327.8 179.9 L326.1 180.4 L324.0 180.5 L322.3 182.2 L321.4 180.5 L318.2 181.2 L316.3 181.5 L316.3 180.7 L318.5 179.1 L322.0 179.0 L324.0 176.8 L325.9 176.3 L327.8 172.7 L327.8 170.8Z M315.0 182.2 L316.9 181.9 L317.6 183.0 L316.7 185.6 L315.3 185.7 L314.6 183.0Z M318.2 181.8 L320.8 181.2 L320.5 182.2 L318.8 183.3Z M327.8 169.3 L329.1 166.7 L329.7 162.3 L332.3 164.6 L334.8 166.2 L331.6 168.5 L329.1 167.6Z M330.4 144.7 L332.0 149.6 L332.3 154.7 L331.6 160.4 L330.4 161.3 L330.4 155.6 L330.0 149.6Z M348.3 151.7 L350.8 147.5 L356.0 140.9 L357.2 136.2 L356.0 131.2 L350.8 136.2 L348.3 143.2Z M283.0 194.7 L281.7 187.5 L286.8 183.0 L293.2 181.5 L299.6 178.3 L306.0 176.0 L306.0 187.5 L303.5 193.3 L297.1 198.2 L289.4 201.0 L286.8 199.6Z M300.9 168.5 L307.3 172.7 L309.9 181.5 L315.0 179.9 L315.0 168.5 L321.4 165.8 L329.1 153.7 L326.5 144.3 L315.0 145.4 L308.6 149.6 L303.5 157.6Z M27.0 189.0 L25.7 171.8 L25.7 157.6 L33.4 153.7 L46.2 153.7 L59.0 153.7 L71.8 149.6 L78.2 151.7 L82.0 159.5 L71.8 163.2 L65.4 166.7 L59.0 170.2 L52.6 178.3 L50.0 183.0 L44.9 187.5 L46.2 194.7 L42.4 189.0 L36.0 187.5Z M25.7 157.6 L14.2 149.6 L-2.4 145.4 L-11.4 138.6 L-20.4 128.6 L-30.6 120.3 L-43.4 114.2 L-56.2 114.2 L-62.6 125.9 L-53.6 136.2 L-43.4 131.2 L-30.6 132.5 L-22.9 140.9 L-15.2 151.7 L-11.4 157.6 L-10.1 168.5 L-7.6 173.5 L-5.0 170.2 L-3.7 163.2 L0.1 156.6 L5.2 154.7 L20.6 155.6Z M46.2 153.7 L47.5 145.4 L56.4 139.7 L65.4 139.7 L73.1 145.4 L74.4 151.7 L59.0 157.6Z M155.0 165.0 L147.3 163.2 L146.0 157.6 L152.4 152.7 L158.8 145.4 L164.0 144.3 L174.2 143.2 L179.3 136.2 L180.6 144.3 L187.0 147.5 L189.6 155.6 L180.6 158.5 L174.2 162.3 L167.8 163.2 L161.4 162.3Z M225.4 145.4 L238.2 143.2 L251.0 145.4 L263.8 149.6 L276.6 152.7 L289.4 153.7 L302.2 152.7 L316.3 149.6 L324.0 140.9 L315.0 133.7 L302.2 131.2 L289.4 125.9 L276.6 120.3 L263.8 117.3 L251.0 114.2 L238.2 114.2 L228.0 114.2 L230.5 131.2Z M155.0 135.0 L162.7 138.6 L166.5 142.0 L170.4 138.6 L172.9 131.2 L171.0 124.6 L176.8 114.9 L180.6 115.8 L176.1 125.9 L176.8 131.2 L187.0 131.2 L188.3 123.2 L187.0 111.0 L181.9 102.4 L174.2 104.2 L167.8 109.4 L161.4 121.7 L155.6 127.3Z M243.3 216.2 L247.2 217.5 L248.4 214.9 L245.9 209.7 L243.3 203.0 L241.8 201.7 L242.7 208.4Z M334.2 247.2 L336.1 252.6 L339.3 256.7 L344.4 261.6 L345.1 266.6 L341.9 274.1 L340.6 279.6 L336.8 281.3 L331.6 281.3 L335.5 277.3 L339.3 272.6 L341.2 265.2 L338.0 258.1 L334.2 252.6 L332.3 246.6Z M295.8 270.3 L298.4 272.6 L300.3 275.7 L295.8 274.9Z M333.8 284.9 L338.3 285.1 L338.4 287.1 L336.8 289.9 L335.5 289.8 L334.5 287.5Z M369.7 284.6 L371.7 286.6 L370.0 288.9 L369.7 290.3 L367.7 291.2 L367.1 294.1 L364.9 295.4 L361.7 294.3 L363.0 292.1 L364.3 290.6 L366.8 288.7 L368.1 286.6Z M369.7 274.7 L371.7 276.1 L373.2 278.0 L373.9 279.8 L377.0 280.0 L376.2 282.4 L375.0 282.9 L374.9 284.6 L372.9 286.5 L372.2 285.9 L372.6 283.8 L371.1 282.6 L372.2 280.5 L372.0 278.0 L370.0 275.7Z M53.9 280.5 L57.1 280.5 L57.1 294.3 L55.8 308.1 L52.0 306.0 L52.6 292.4Z M141.3 153.7 L144.8 152.3 L150.3 151.3 L149.2 150.6 L150.8 148.1 L149.0 147.5 L148.3 144.3 L146.6 142.0 L144.8 140.9 L146.0 137.1 L143.5 137.1 L144.5 134.7 L142.2 134.7 L140.7 138.6 L141.9 142.0 L142.5 143.6 L144.5 143.4 L144.8 146.7 L142.8 147.1 L143.2 148.6 L141.9 150.0 L144.1 150.8Z M135.8 150.2 L140.5 149.2 L140.9 146.4 L141.6 144.0 L139.3 142.5 L135.8 144.9 L136.4 147.5Z" fill="#c5dfb6"/><path d="M50.0 218.8 L56.4 214.9 L64.1 216.2 L71.8 216.9 L82.0 220.7 L85.9 227.8 L88.4 230.4 L89.7 235.5 L84.6 240.7 L79.5 244.6 L71.8 247.2 L65.4 248.6 L59.0 245.9 L53.9 240.7 L50.0 234.2 L46.2 227.8 L47.5 222.7Z M30.8 203.0 L36.0 203.0 L41.1 207.0 L42.4 214.9 L48.8 217.5 L46.2 218.8 L39.8 214.9 L33.4 210.4 L27.0 207.0 L23.2 203.7Z M130.7 215.6 L138.4 216.9 L144.8 217.5 L152.4 217.5 L160.1 218.8 L167.8 220.1 L176.8 220.7 L184.4 221.4 L188.3 224.0 L187.0 231.6 L184.4 236.8 L176.8 238.1 L167.8 236.8 L164.0 234.2 L159.5 229.1 L160.1 222.7 L155.0 222.7 L148.6 221.4 L142.2 222.0 L138.4 222.7 L132.0 218.2Z M263.8 192.6 L274.0 189.7 L283.0 194.7 L286.8 198.9 L285.6 205.7 L288.8 212.3 L283.0 216.9 L277.9 212.3 L275.3 217.5 L277.9 222.7 L282.4 226.5 L276.6 222.7 L274.0 216.2 L274.0 208.4 L270.2 207.0 L266.4 200.3Z M270.6 220.7 L273.4 221.1 L277.0 224.6 L281.1 229.1 L284.3 231.6 L284.0 235.2 L282.4 235.2 L279.2 232.9 L277.0 229.1 L274.9 225.6Z M288.1 225.9 L289.4 225.5 L291.1 224.6 L293.2 223.7 L295.8 221.4 L298.0 218.8 L299.3 219.8 L300.9 221.1 L299.6 222.3 L299.4 225.2 L300.9 226.5 L299.0 228.8 L297.7 231.0 L297.1 232.9 L295.2 232.9 L293.2 231.9 L291.3 231.9 L289.4 229.7 L288.1 227.8Z M301.9 227.2 L303.2 226.1 L306.7 226.6 L308.6 225.9 L308.0 227.3 L305.4 227.3 L302.8 227.8 L303.5 229.1 L306.4 229.0 L304.5 230.1 L305.8 232.9 L305.1 234.2 L304.1 233.8 L303.5 231.3 L302.6 231.6 L302.7 234.9 L301.6 234.9 L301.6 232.3 L300.7 231.3Z M316.3 228.8 L320.1 228.8 L321.4 232.0 L324.6 230.0 L329.1 231.1 L333.6 232.7 L335.5 234.9 L337.8 235.5 L336.8 236.8 L338.0 238.1 L341.2 240.9 L338.0 240.9 L335.5 238.7 L332.9 237.7 L331.6 239.4 L329.1 239.5 L326.5 238.1 L325.2 238.5 L326.3 236.8 L325.2 234.9 L322.0 233.6 L318.8 232.9 L318.6 231.6 L320.1 230.9 L317.6 230.6Z M302.8 203.7 L305.0 203.8 L304.8 207.0 L304.1 209.0 L307.3 211.0 L306.7 209.8 L303.1 210.0 L302.2 207.0Z M304.8 218.8 L306.7 216.9 L309.2 215.3 L310.5 218.2 L309.2 220.1 L307.3 219.5Z M304.8 213.0 L308.6 211.7 L309.2 213.6 L306.7 215.6 L304.8 214.3Z M283.3 236.5 L284.9 235.5 L287.5 236.4 L290.3 236.0 L292.9 236.7 L295.2 237.7 L295.0 239.0 L289.4 238.2 L284.9 237.3Z M311.8 225.2 L313.1 225.9 L313.3 228.4 L311.8 227.8Z M312.4 231.6 L316.0 231.6 L315.6 232.7 L312.4 232.4Z M338.7 234.9 L343.2 233.2 L343.5 234.2 L340.6 235.9 L338.7 235.5Z M250.7 215.3 L252.5 216.9 L253.3 218.8 L251.9 220.1 L250.7 218.8Z M303.5 194.5 L304.8 194.7 L303.5 198.9 L302.5 197.5Z M287.7 202.6 L290.0 201.7 L290.7 202.3 L288.8 204.1Z M179.3 136.2 L184.4 125.9 L190.8 115.8 L202.4 115.8 L215.2 114.2 L228.0 117.3 L233.1 128.6 L230.5 140.9 L220.3 145.4 L207.5 147.5 L197.2 148.6 L187.0 147.5 L180.6 144.3Z M304.8 149.6 L311.2 153.7 L316.3 157.6 L321.4 156.6 L325.2 149.6 L327.8 145.4 L320.1 145.4 L312.4 146.4Z M307.3 168.5 L312.4 170.2 L315.0 166.7 L318.8 163.2 L322.7 159.5 L318.8 157.6 L312.4 161.3 L307.3 165.0Z M28.3 186.0 L28.3 178.3 L32.1 171.8 L39.8 168.5 L46.2 166.7 L52.6 163.2 L60.3 159.5 L64.1 163.2 L59.0 167.6 L52.6 174.3 L50.0 180.7 L44.9 186.0 L41.1 187.5 L33.4 187.5Z M276.6 138.6 L289.4 140.9 L299.6 138.6 L297.1 131.2 L283.0 128.6 L271.5 131.2Z M248.4 138.6 L261.2 140.9 L266.4 133.7 L258.7 125.9 L245.9 128.6Z" fill="#b8d8ab"/><path d="M126.8 190.4 L135.8 186.8 L142.2 182.2 L148.6 180.7 L158.8 179.9 L162.7 181.5 L167.8 183.8 L174.2 184.5 L180.6 184.5 L189.6 185.3 L193.4 187.5 L196.0 198.9 L197.2 204.4 L194.7 208.4 L187.0 209.7 L176.8 209.7 L167.8 208.4 L158.8 207.0 L148.6 206.4 L138.4 206.4 L127.5 205.7 L126.8 200.3Z M192.1 187.5 L194.7 183.0 L197.2 177.6 L204.9 177.6 L210.0 184.5 L213.9 189.0 L220.3 191.9 L225.4 194.0 L225.4 198.9 L219.0 205.7 L212.6 209.0 L206.2 211.7 L203.6 211.0 L202.4 205.7 L198.5 198.9 L193.4 191.9Z M199.8 212.3 L204.9 213.6 L214.5 212.3 L212.6 217.5 L208.8 222.7 L203.6 226.5 L201.1 224.0 L202.4 217.5Z M163.3 247.2 L167.8 249.9 L174.2 252.6 L180.6 256.7 L181.9 263.7 L178.0 269.6 L172.9 272.6 L171.0 271.1 L167.2 262.3 L163.3 251.2Z M293.2 256.7 L299.6 254.3 L306.0 251.9 L312.4 250.6 L318.8 250.6 L325.2 252.6 L330.4 255.3 L334.2 259.5 L335.5 266.6 L331.6 272.6 L326.5 274.9 L321.4 274.1 L316.3 270.6 L309.9 271.8 L303.5 273.4 L297.1 269.6 L293.2 263.7Z M-2.4 181.5 L-5.0 175.1 L-3.7 168.5 L1.4 165.0 L7.8 166.7 L12.9 171.8 L15.5 179.9 L19.3 187.5 L19.3 194.7 L16.8 198.9 L12.9 197.5 L7.8 191.9 L4.0 186.0 L0.1 184.5Z M43.6 234.2 L48.8 235.5 L52.6 243.3 L59.0 248.6 L62.8 253.9 L64.1 262.3 L64.1 271.1 L62.8 280.5 L66.7 287.1 L64.1 298.0 L61.6 306.0 L56.4 301.9 L57.7 290.6 L57.7 280.5 L57.1 268.1 L58.4 253.9 L52.6 247.9 L47.5 238.1Z M0.1 184.5 L7.8 197.5 L9.1 197.5 L2.7 186.0Z" fill="#f8f4e4"/><path d="M210.0 183.0 L215.2 176.8 L217.7 171.8 L215.2 163.2 L210.0 159.5 L215.2 153.7 L228.0 153.7 L238.2 155.6 L248.4 157.6 L257.4 157.6 L263.8 157.6 L271.5 161.3 L283.0 161.3 L292.0 163.2 L299.6 166.7 L295.8 171.8 L286.8 175.1 L280.4 179.9 L276.6 187.5 L270.2 189.0 L261.2 190.4 L251.0 187.5 L245.9 184.5 L242.0 187.5 L240.8 194.7 L235.6 196.8 L228.0 194.7 L222.8 194.0 L217.7 192.6 L212.6 187.5Z" fill="#f3efda"/></g></g><path d="M-81.8 396.2 L-62.6 394.9 L-53.6 387.1 L-43.4 387.1 L-37.0 379.0 L-24.2 374.1 L-11.4 371.7 L1.4 377.5 L14.2 378.0 L20.6 374.1 L27.0 369.4 L36.0 369.4 L43.6 376.5 L51.3 377.5 L56.4 371.7 L59.0 358.9 L61.6 349.7 L64.1 343.0 L68.0 336.8 L74.4 333.3 L75.6 335.3 L71.8 341.4 L69.2 347.9 L70.5 362.9 L70.5 374.1 L66.7 387.1 L59.0 399.4 L52.6 410.3 L57.7 422.9 L65.4 430.7 L80.8 427.7 L97.4 418.4 L107.6 408.7 L114.0 396.2 L123.0 387.1 L130.7 369.4 L135.8 358.9 L142.2 357.0 L148.6 353.2 L155.0 355.1 L161.4 355.1 L167.8 353.2 L174.2 355.1 L180.6 355.1 L187.0 353.2 L190.8 349.7 L197.2 354.0 L199.8 351.4 L206.2 346.9 L212.6 343.0 L219.0 341.4 L222.8 344.6 L228.0 346.2 L235.6 347.2 L238.2 349.7 L240.8 353.2 L244.6 353.2 L248.4 349.0 L253.6 344.6 L261.2 343.6 L267.6 343.0 L276.6 340.4 L283.0 343.0 L289.4 341.4 L295.8 343.0 L302.2 343.9 L308.6 342.3 L315.0 341.4 L321.4 341.4 L327.8 343.6 L334.2 344.6 L340.6 349.0 L347.0 351.4 L353.4 355.1 L359.8 358.1 L366.2 360.9 L367.5 367.2 L361.1 376.5 L358.5 387.1 L361.1 393.0 L366.2 393.0 L379.0 396.2 L379.0 466.8 L-81.8 466.8Z" fill="#f4f4f4"/><path d="M55.2 61.3 L61.6 45.3 L71.8 32.7 L91.0 24.9 L110.2 17.4 L120.4 32.7 L125.6 49.1 L124.3 68.5 L121.7 83.9 L120.4 94.7 L117.9 100.5 L115.3 105.9 L107.6 107.7 L101.2 114.9 L96.8 118.8 L94.8 125.9 L92.9 131.2 L91.0 131.5 L87.2 128.6 L84.0 123.2 L82.0 115.8 L79.5 109.4 L80.1 102.4 L78.2 96.7 L76.9 86.2 L73.1 76.6 L64.1 74.0 L59.0 68.5Z M162.7 56.2 L167.8 69.6 L172.9 59.4 L176.8 60.7 L183.2 49.1 L174.2 45.3 L162.7 51.3Z M208.8 46.9 L219.0 49.1 L228.0 43.8 L222.8 35.4 L212.6 41.4Z M271.5 54.1 L276.6 58.8 L280.4 56.2 L276.6 47.6 L272.8 46.1Z" fill="#fbfbfb"/><path d="M33.4 71.3 L46.2 72.9 L48.8 68.5 L52.6 56.2 L61.6 41.4 L69.2 27.9 L56.4 21.8 L39.8 27.9 L30.8 38.9 L36.0 56.2Z M25.7 62.6 L36.0 60.7 L37.2 45.3 L28.3 41.4 L23.2 52.7Z M25.7 79.1 L46.2 80.6 L46.2 75.6 L30.8 70.2Z" fill="#f5f5ef"/><path d="M208.8 163.2 L211.3 160.4 L213.9 159.5 L216.4 160.0 L216.4 163.2 L213.9 163.2 L213.9 165.0 L213.0 167.6 L215.8 169.3 L216.4 171.8 L217.7 173.5 L217.1 176.8 L215.2 177.2 L212.6 176.1 L211.3 174.3 L212.0 171.3 L210.0 168.5 L208.8 165.8Z M281.7 150.6 L284.3 148.6 L288.1 144.3 L289.4 141.6 L288.5 141.6 L286.2 145.8 L283.0 148.6Z" fill="#aadaff"/></g></defs>
<use href="#world" x="-460.8" y="0"/>
<use href="#world" x="0.0" y="0"/>
<use href="#world" x="460.8" y="0"/>
<use href="#world" x="921.6" y="0"/>
<line x1="147.6" y1="0" x2="147.6" y2="450" stroke="#c9d3dc" stroke-width=".6" opacity=".7"/>
<line x1="608.4" y1="0" x2="608.4" y2="450" stroke="#c9d3dc" stroke-width=".6" opacity=".7"/>
<line x1="0" y1="228.1" x2="900" y2="228.1" stroke="#b9a2aa" stroke-width="1.4" stroke-dasharray="4.7 2.5"/>
<path d="M379.0 -1.9 L379.0 78.5 L393.2 109.2 L392.4 114.7 L365.9 147.6 L379.0 157.9" fill="none" stroke="#94798a" stroke-width="1.15" stroke-dasharray="4.6 2.4"/>
<path d="M379.0 157.9 L379.0 229.5" fill="none" stroke="#b7a4ae" stroke-width="1.1" stroke-dasharray="4.6 2.4"/>
<path d="M379.0 229.5 L404.4 229.5 L404.4 223.4 L400.8 223.4 L400.8 219.2 L409.1 219.2 L418.0 241.5 L395.2 242.0 L388.8 248.5 L388.8 290.3 L379.0 302.8" fill="none" stroke="#94798a" stroke-width="1.15" stroke-dasharray="4.6 2.4"/>
<path d="M379.0 302.8 L379.0 453.1" fill="none" stroke="#c3a9b3" stroke-width="1.1" stroke-dasharray="4.6 2.4"/>
<line x1="379.0" y1="0" x2="379.0" y2="450" stroke="#d5c9d0" stroke-width=".7"/>
<path d="M839.8 -1.9 L839.8 78.5 L854.0 109.2 L853.2 114.7 L826.7 147.6 L839.8 157.9" fill="none" stroke="#94798a" stroke-width="1.15" stroke-dasharray="4.6 2.4"/>
<path d="M839.8 157.9 L839.8 229.5" fill="none" stroke="#b7a4ae" stroke-width="1.1" stroke-dasharray="4.6 2.4"/>
<path d="M839.8 229.5 L865.2 229.5 L865.2 223.4 L861.6 223.4 L861.6 219.2 L869.9 219.2 L878.8 241.5 L856.0 242.0 L849.6 248.5 L849.6 290.3 L839.8 302.8" fill="none" stroke="#94798a" stroke-width="1.15" stroke-dasharray="4.6 2.4"/>
<path d="M839.8 302.8 L839.8 453.1" fill="none" stroke="#c3a9b3" stroke-width="1.1" stroke-dasharray="4.6 2.4"/>
<line x1="839.8" y1="0" x2="839.8" y2="450" stroke="#d5c9d0" stroke-width=".7"/>
<text x="20.8" y="163.0" text-anchor="middle" font-size="8.7" font-style="italic" fill="#3a3a3a" stroke="#fff" stroke-width="2" stroke-opacity=".8" paint-order="stroke" letter-spacing="-0.3" font-family="Liberation Sans, sans-serif">NORTH</text><text x="20.8" y="171.3" text-anchor="middle" font-size="8.7" font-style="italic" fill="#3a3a3a" stroke="#fff" stroke-width="2" stroke-opacity=".8" paint-order="stroke" letter-spacing="-0.3" font-family="Liberation Sans, sans-serif">AMERICA</text>
<text x="77.3" y="241.1" text-anchor="middle" font-size="8.7" font-style="italic" fill="#3a3a3a" stroke="#fff" stroke-width="2" stroke-opacity=".8" paint-order="stroke" letter-spacing="-0.3" font-family="Liberation Sans, sans-serif">SOUTH</text><text x="77.3" y="249.8" text-anchor="middle" font-size="8.7" font-style="italic" fill="#3a3a3a" stroke="#fff" stroke-width="2" stroke-opacity=".8" paint-order="stroke" letter-spacing="-0.3" font-family="Liberation Sans, sans-serif">AMERICA</text>
<text x="169.7" y="159.7" text-anchor="middle" font-size="8.7" font-style="italic" fill="#3a3a3a" stroke="#fff" stroke-width="2" stroke-opacity=".8" paint-order="stroke" letter-spacing="-0.3" font-family="Liberation Sans, sans-serif">EUROPE</text>
<text x="167.0" y="206.9" text-anchor="middle" font-size="8.7" font-style="italic" fill="#3a3a3a" stroke="#fff" stroke-width="2" stroke-opacity=".8" paint-order="stroke" letter-spacing="-0.3" font-family="Liberation Sans, sans-serif">AFRICA</text>
<text x="268.0" y="140.0" text-anchor="middle" font-size="8.7" font-style="italic" fill="#3a3a3a" stroke="#fff" stroke-width="2" stroke-opacity=".8" paint-order="stroke" letter-spacing="-0.3" font-family="Liberation Sans, sans-serif">ASIA</text>
<text x="318.0" y="265.0" text-anchor="middle" font-size="8.7" font-style="italic" fill="#3a3a3a" stroke="#fff" stroke-width="2" stroke-opacity=".8" paint-order="stroke" letter-spacing="-0.3" font-family="Liberation Sans, sans-serif">OCEANIA</text>
<text x="170.5" y="397.3" text-anchor="middle" font-size="8.4" font-style="italic" fill="#3a3a3a" stroke="#fff" stroke-width="2" stroke-opacity=".8" paint-order="stroke" letter-spacing="-0.3" font-family="Liberation Sans, sans-serif">ANTARCTICA</text>
<text x="94.0" y="185.8" text-anchor="middle" font-size="8.25"  fill="#5a8ad6"  letter-spacing="0" font-family="Liberation Sans, sans-serif">Atlantic</text><text x="94.0" y="192.9" text-anchor="middle" font-size="8.25"  fill="#5a8ad6"  letter-spacing="0" font-family="Liberation Sans, sans-serif">Ocean</text>
<text x="250.5" y="255.8" text-anchor="middle" font-size="8.25"  fill="#5a8ad6"  letter-spacing="0" font-family="Liberation Sans, sans-serif">Indian</text><text x="250.5" y="262.9" text-anchor="middle" font-size="8.25"  fill="#5a8ad6"  letter-spacing="0" font-family="Liberation Sans, sans-serif">Ocean</text>
<text x="421.5" y="253.8" text-anchor="middle" font-size="8.25"  fill="#5a8ad6"  letter-spacing="0" font-family="Liberation Sans, sans-serif">Pacific</text><text x="421.5" y="260.9" text-anchor="middle" font-size="8.25"  fill="#5a8ad6"  letter-spacing="0" font-family="Liberation Sans, sans-serif">Ocean</text>
<text x="481.6" y="163.0" text-anchor="middle" font-size="8.7" font-style="italic" fill="#3a3a3a" stroke="#fff" stroke-width="2" stroke-opacity=".8" paint-order="stroke" letter-spacing="-0.3" font-family="Liberation Sans, sans-serif">NORTH</text><text x="481.6" y="171.3" text-anchor="middle" font-size="8.7" font-style="italic" fill="#3a3a3a" stroke="#fff" stroke-width="2" stroke-opacity=".8" paint-order="stroke" letter-spacing="-0.3" font-family="Liberation Sans, sans-serif">AMERICA</text>
<text x="538.1" y="241.1" text-anchor="middle" font-size="8.7" font-style="italic" fill="#3a3a3a" stroke="#fff" stroke-width="2" stroke-opacity=".8" paint-order="stroke" letter-spacing="-0.3" font-family="Liberation Sans, sans-serif">SOUTH</text><text x="538.1" y="249.8" text-anchor="middle" font-size="8.7" font-style="italic" fill="#3a3a3a" stroke="#fff" stroke-width="2" stroke-opacity=".8" paint-order="stroke" letter-spacing="-0.3" font-family="Liberation Sans, sans-serif">AMERICA</text>
<text x="630.5" y="159.7" text-anchor="middle" font-size="8.7" font-style="italic" fill="#3a3a3a" stroke="#fff" stroke-width="2" stroke-opacity=".8" paint-order="stroke" letter-spacing="-0.3" font-family="Liberation Sans, sans-serif">EUROPE</text>
<text x="627.8" y="206.9" text-anchor="middle" font-size="8.7" font-style="italic" fill="#3a3a3a" stroke="#fff" stroke-width="2" stroke-opacity=".8" paint-order="stroke" letter-spacing="-0.3" font-family="Liberation Sans, sans-serif">AFRICA</text>
<text x="728.8" y="140.0" text-anchor="middle" font-size="8.7" font-style="italic" fill="#3a3a3a" stroke="#fff" stroke-width="2" stroke-opacity=".8" paint-order="stroke" letter-spacing="-0.3" font-family="Liberation Sans, sans-serif">ASIA</text>
<text x="778.8" y="265.0" text-anchor="middle" font-size="8.7" font-style="italic" fill="#3a3a3a" stroke="#fff" stroke-width="2" stroke-opacity=".8" paint-order="stroke" letter-spacing="-0.3" font-family="Liberation Sans, sans-serif">OCEANIA</text>
<text x="631.3" y="397.3" text-anchor="middle" font-size="8.4" font-style="italic" fill="#3a3a3a" stroke="#fff" stroke-width="2" stroke-opacity=".8" paint-order="stroke" letter-spacing="-0.3" font-family="Liberation Sans, sans-serif">ANTARCTICA</text>
<text x="554.8" y="185.8" text-anchor="middle" font-size="8.25"  fill="#5a8ad6"  letter-spacing="0" font-family="Liberation Sans, sans-serif">Atlantic</text><text x="554.8" y="192.9" text-anchor="middle" font-size="8.25"  fill="#5a8ad6"  letter-spacing="0" font-family="Liberation Sans, sans-serif">Ocean</text>
<text x="711.3" y="255.8" text-anchor="middle" font-size="8.25"  fill="#5a8ad6"  letter-spacing="0" font-family="Liberation Sans, sans-serif">Indian</text><text x="711.3" y="262.9" text-anchor="middle" font-size="8.25"  fill="#5a8ad6"  letter-spacing="0" font-family="Liberation Sans, sans-serif">Ocean</text>
<text x="882.3" y="253.8" text-anchor="middle" font-size="8.25"  fill="#5a8ad6"  letter-spacing="0" font-family="Liberation Sans, sans-serif">Pacific</text><text x="882.3" y="260.9" text-anchor="middle" font-size="8.25"  fill="#5a8ad6"  letter-spacing="0" font-family="Liberation Sans, sans-serif">Ocean</text>
</svg>
<div class="a" style="left:9px;top:8.700px;width:174px;height:36.200px;background:#fff;border-radius:2px;box-shadow:0 1px 4px -1px rgba(0,0,0,.3)"></div>
<div class="a" style="left:82.200px;top:8.700px;width:1px;height:36.200px;background:#e6e6e6"></div>
<div class="t" style="left:29.500px;top:18.500px;font-size:16.200px;color:#000;letter-spacing:-.05px;-webkit-text-stroke:.3px #000">Map</div>
<div class="t" style="left:103.500px;top:18.500px;font-size:16.200px;color:#565656;letter-spacing:.02px">Satellite</div>
<div class="a" style="left:470.5px;top:160.5px;width:42px;height:42px;border-radius:50%;background:rgba(190,150,115,.38)"></div><div class="a" style="left:476.0px;top:166.0px;width:31px;height:31px;border-radius:50%;background:rgba(186,142,104,.92)"></div><div class="t" style="left:488.5px;top:176.2px;font-size:9.600px;font-weight:700;color:#000">5</div><svg class="a" style="left:492.30px;top:182.60px" width="21.4" height="21.4" viewBox="0 0 21.6 21.6"><circle cx="10.8" cy="10.8" r="10.8" fill="#e2231a"/><path d="M8.700 4h4.200l-.5 8.900H9.200z M8.900 14.500h3.800v3.600H8.900z" fill="#fff"/></svg>
<div class="a" style="left:511px;top:255px;width:42px;height:42px;border-radius:50%;background:rgba(190,150,115,.38)"></div><div class="a" style="left:516.5px;top:260.5px;width:31px;height:31px;border-radius:50%;background:rgba(186,142,104,.92)"></div><div class="t" style="left:529px;top:270.7px;font-size:9.600px;font-weight:700;color:#000">2</div><svg class="a" style="left:533.90px;top:276.50px" width="21.4" height="21.4" viewBox="0 0 21.6 21.6"><circle cx="10.8" cy="10.8" r="10.8" fill="#e2231a"/><path d="M8.700 4h4.200l-.5 8.900H9.200z M8.900 14.500h3.800v3.600H8.900z" fill="#fff"/></svg>
<svg class="a" style="left:624.5px;top:133.5px" width="34" height="34" viewBox="0 0 34 34"><g fill="#fff" stroke="#222" stroke-width="1.500" stroke-linejoin="round"><path d="M4.700 .5v4" /><path d="M1.900 32.600V10.400a7.800 7.500 0 0 1 15.600 0V32.600z"/><path d="M17.500 18h12.700l2.300 8h-15z"/><path d="M17.500 26h13.600v6.600H17.500z"/></g><path d="M2 10.400h15.400" stroke="#222" stroke-width="1.500"/><path d="M3.600 11v21.600M15.800 11v21.600" stroke="#222" stroke-width=".7" fill="none"/><path d="M7.100 11.500v21M11.800 11.500v21" stroke="#222" stroke-width="1.300" fill="none"/><path d="M7.100 14.500h4.700M7.100 18.300h4.700M7.100 22.100h4.700M7.100 25.900h4.700M7.100 29.700h4.700" stroke="#222" stroke-width="1.500" fill="none"/><path d="M20.300 28.200h3.300v2.600h-3.300zM24.600 28.200h3.300v2.600h-3.300z" fill="#222"/></svg><svg class="a" style="left:618.40px;top:156.10px" width="16" height="16" viewBox="0 0 21.6 21.6"><circle cx="10.8" cy="10.8" r="10.8" fill="#dd2415"/><path d="M8.700 4h4.200l-.5 8.900H9.200z M8.900 14.500h3.800v3.600H8.900z" fill="#fff"/></svg>
<div class="a" style="left:512px;top:41.80000000000001px;width:251.500px;height:83.200px;background:#fff;border-radius:7px;box-shadow:0 2px 7px 1px rgba(0,0,0,.3)"></div><svg class="a" style="left:628px;top:124.5px" width="21" height="11" viewBox="0 0 21 11"><path d="M0 0h21L10.500 10z" fill="#fff"/></svg><div class="t" style="left:523.3px;top:55px;font-size:16.200px;color:#c4996c;-webkit-text-stroke:.5px #c4996c;text-decoration:underline;text-decoration-thickness:1.200px;text-underline-offset:2.500px;letter-spacing:.15px">S14 Wheat, 60Kbu, (Aeratio<span style="color:#333;-webkit-text-stroke:.4px #333;text-decoration:none;display:inline-block;font-size:11.500px;letter-spacing:0">…</span></div><svg class="a" style="left:751.5px;top:46px" width="9" height="9" viewBox="0 0 9 9"><path d="M1 1l7 7M8 1l-7 7" stroke="#4a4a4a" stroke-width="1" fill="none"/></svg><svg class="a" style="left:567px;top:94px" width="15.600" height="18" viewBox="0 0 13 15"><g fill="none" stroke="#222" stroke-width="1.1"><path d="M3.2 8.6V2.6a1.9 1.9 0 0 1 3.8 0v6a3.1 3.1 0 1 1-3.8 0z"/><path d="M10.3 4.5v8M8.600 6.200l1.700 1.200 1.700-1.200M8.600 10.800l1.700-1.200 1.700 1.200M8.200 8.500h4.200" stroke-width=".8"/></g><circle cx="5.100" cy="11" r="1.600" fill="#222"/><path d="M5.100 5v6" stroke="#222" stroke-width="1.100"/></svg><div class="t" style="left:589.3px;top:95px;font-size:16.200px;color:#222;letter-spacing:-.35px">16 °C</div><svg class="a" style="left:642px;top:96px" width="12" height="16.800" viewBox="0 0 10 14"><path d="M5 1C3.400 4 1 6.600 1 9.200a4 4 0 0 0 8 0C9 6.600 6.600 4 5 1z" fill="none" stroke="#222" stroke-width="1.100"/><text x="5" y="11" font-size="3.600" font-family="Liberation Sans, sans-serif" font-weight="700" text-anchor="middle" fill="#222">MC</text></svg><div class="t" style="left:659.3px;top:95px;font-size:16.200px;color:#222;letter-spacing:-.35px">11.5 %</div>
<div class="a" style="left:7px;top:381px;width:40px;height:41px;background:#fbfbfb;border-radius:2px;box-shadow:0 1px 3px rgba(0,0,0,.3)"></div>
<div class="a" style="left:61px;top:381px;width:40px;height:41px;background:#fbfbfb;border-radius:2px;box-shadow:0 1px 3px rgba(0,0,0,.3)"></div>
<svg class="a" style="left:15.199999999999989px;top:391.4px" width="22" height="22" viewBox="0 0 22 22"><path fill="#c4996c" d="M0 22V16.400L13 3.400l5.600 5.600L5.600 22z"/><path fill="#c4996c" d="M14.300 2.100 15.900.5a1.300 1.300 0 0 1 1.800 0l3.800 3.800a1.300 1.300 0 0 1 0 1.800l-1.600 1.600z"/><path d="M3.600 17.300 13.400 7.500" stroke="#fbfbfb" stroke-width=".8" stroke-dasharray="1 .5"/><circle cx="3.300" cy="18.700" r="1.200" fill="#fbfbfb"/></svg>
<svg class="a" style="left:69.69999999999999px;top:391px" width="22" height="22" viewBox="0 0 22 22"><g fill="#c4996c"><path d="M0 0h8.200L0 8.200zM22 0v8.200L13.800 0zM0 22v-8.200L8.200 22zM22 22h-8.200L22 13.800z"/></g><path d="M3.500 3.500 18.500 18.500M18.500 3.500 3.500 18.500" stroke="#c4996c" stroke-width="3.400"/></svg>
<div class="t" style="left:5.5px;top:427.5px;font-size:17.200px;font-weight:700;color:#fff;letter-spacing:-.55px;-webkit-text-stroke:.8px rgba(120,130,140,.55);paint-order:stroke fill;text-shadow:0 0 2px rgba(0,0,0,.25)">Google</div>
</div>
<div class="card" style="left:117px;top:845px;width:900px;height:80px"></div>
<div class="a" style="left:117px;top:891px;width:900px;height:4px;background:#c4996c"></div>
<svg class="a" style="left:125px;top:855px" width="34" height="25.2" viewBox="0 -1408 2048 1536" preserveAspectRatio="none"><path transform="scale(1,-1)" fill="#c4996c" d="M2048 0v-128h-2048v1536h128v-1408h1920zM1920 1288v-435q0-21-19.500-29.500t-35.500 7.500l-121 121-633-633q-10-10-23-10t-23 10l-233 233-416-416-192 192 585 585q10 10 23 10t23-10l233-233 464 464-121 121q-16 16-7.500 35.500t29.500 19.500h435q14 0 23-9t9-23z"/></svg>
<div class="t tan" style="left:180.8px;top:857.5px;font-size:21.6px;letter-spacing:-.25px">Process Overview</div>
<div class="a" style="left:5px;top:58px;width:100px;height:856px;background:#3a3a3c">
<div class="a" style="left:0;top:0;width:100px;height:82px;background:#fff"></div>
<svg class="a" style="left:35.5px;top:21px" width="29" height="23.2" viewBox="0 0 29 23.2"><path fill="#3a3a3c" d="M14.5 0A14.5 14.5 0 0 1 29 14.5c0 3-.9 5.9-2.5 8.3-.2.3-.5.4-.8.4H3.3c-.3 0-.6-.1-.8-.4A14.4 14.4 0 0 1 0 14.500 14.500 14.500 0 0 1 14.500 0z"/><g fill="#fff"><circle cx="14.5" cy="4.2" r="2"/><circle cx="7.2" cy="7.2" r="2"/><circle cx="4.2" cy="14.5" r="2"/><circle cx="21.8" cy="7.2" r="2"/><circle cx="24.8" cy="14.5" r="2"/><circle cx="14.5" cy="18.6" r="3.1"/><path d="M13.3 17.5 15.9 7.6l1.9.5-2.6 9.9z"/></g></svg>
<div class="sb" style="top:47.9px;color:#444;letter-spacing:-0.19px">Dashboard</div>
<svg class="a" style="left:35.2px;top:99.1px" width="27.4" height="29" viewBox="0 -1536 1664 1792" preserveAspectRatio="none"><path transform="scale(1,-1)" fill="#c4996c" d="M1303 572l-512-512q-10-9-23-9t-23 9l-288 288q-9 10-9 23t9 22l46 46q9 9 22 9t23-9l220-220 444 444q10 9 23 9t22-9l46-46q9-9 9-22t-9-23zM128-128h1408v1024h-1408v-1024zM512 1088v288q0 14-9 23t-23 9h-64q-14 0-23-9t-9-23v-288q0-14 9-23t23-9h64q14 0 23 9t9 23zM1280 1088v288q0 14-9 23t-23 9h-64q-14 0-23-9t-9-23v-288q0-14 9-23t23-9h64q14 0 23 9t9 23zM1664 1152v-1280q0-52-38-90t-90-38h-1408q-52 0-90 38t-38 90v1280q0 52 38 90t90 38h128v96q0 66 47 113t113 47h64q66 0 113-47t47-113v-96h384v96q0 66 47 113t113 47h64q66 0 113-47t47-113v-96h128q52 0 90-38t38-90z"/></svg>
<div class="sb" style="top:129.9px;letter-spacing:0.13px">Activities</div>
<svg class="a" style="left:33px;top:182.4px" width="33.7" height="25.2" viewBox="0 -1408 2048 1536" preserveAspectRatio="none"><path transform="scale(1,-1)" fill="#c4996c" d="M2048 0v-128h-2048v1536h128v-1408h1920zM1920 1288v-435q0-21-19.500-29.500t-35.500 7.500l-121 121-633-633q-10-10-23-10t-23 10l-233 233-416-416-192 192 585 585q10 10 23 10t23-10l233-233 464 464-121 121q-16 16-7.500 35.500t29.500 19.500h435q14 0 23-9t9-23z"/></svg>
<div class="sb" style="top:211.9px;letter-spacing:0.04px">Processes</div>
<svg style="position:absolute;left:37.5px;top:263.5px;" width="25" height="28.5" viewBox="0 0 448 512" preserveAspectRatio="xMidYMid meet"><path fill="#c4996c" d="M288 0H128c-17.7 0-32 14.3-32 32s14.3 32 32 32v151.5L7.5 426.3C2.6 435 0 444.7 0 454.7 0 486.4 25.6 512 57.3 512h333.4c31.6 0 57.3-25.6 57.3-57.3 0-10-2.6-19.8-7.5-28.4L320 215.5V64c17.7 0 32-14.3 32-32S337.7 0 320 0zm-96 215.5V64h64v151.5c0 11.1 2.9 22.1 8.4 31.8L306 320H142l41.6-72.7c5.5-9.7 8.4-20.6 8.4-31.8"/></svg>
<div class="sb" style="top:293.9px;letter-spacing:-0.21px">Recipes</div>
<svg class="a" style="left:33.7px;top:347px;" width="32.3" height="30.6" viewBox="0 0 32 30" preserveAspectRatio="none"><path fill="#c4996c" d="M0 30V8a8 8 0 0 1 16 0v7.2h13.4L32 23.4h-2.6V30H12V6H10.2v2.2H6.2V6H4.8v24z M6.2 11.1h4v2.2h-4z M6.2 16.2h4v2.1h-4z M6.2 21h4v2.1h-4z M6.2 25.8h4V30h-4z"/><path fill="#3a3a3c" d="M14.9 24.1h5.4v4.8h-5.4z M21.9 24.1h5.6v4.8h-5.6z"/></svg>
<div class="sb" style="top:385.4px;letter-spacing:-0.07px">Assets</div>
<svg class="a" style="left:39.7px;top:437px" width="20.2" height="31.8" viewBox="0 0 20.2 31.8"><path fill="#c4996c" d="M0 7.5C0 3.300 4.500 0 10.100 0s10.100 3.300 10.100 7.500v16.800c0 4.200-4.500 7.500-10.100 7.500S0 28.500 0 24.300z"/><path d="M3.500 7.400C5 5.300 7.400 4.300 10.100 4.300s5.100 1 6.600 3.100" fill="none" stroke="#3a3a3c" stroke-width="1.300"/><path d="M1 24.500c2 2.400 5.300 3.600 9.100 3.600s7.100-1.200 9.100-3.600" fill="none" stroke="#3a3a3c" stroke-width="1.300"/><circle cx="10.100" cy="18.300" r="1" fill="#3a3a3c"/><path d="M7.900 16.300a3 3 0 0 0 0 4M12.300 16.300a3 3 0 0 1 0 4M6.300 15.200a4.800 4.800 0 0 0 0 6.200M13.900 15.200a4.800 4.800 0 0 1 0 6.200" fill="none" stroke="#3a3a3c" stroke-width=".8"/></svg>
<div class="sb" style="top:476.4px;letter-spacing:-0.19px">Devices</div>
<svg class="a" style="left:35.5px;top:526.6px" width="28.2" height="29.8" viewBox="64 -1536 1664 1792" preserveAspectRatio="none"><path transform="scale(1,-1)" fill="#c4996c" d="M912-160q0 16-16 16-59 0-101.500 42.500t-42.500 101.500q0 16-16 16t-16-16q0-73 51.500-124.500t124.500-51.500q16 0 16 16zM1728 128q0-52-38-90t-90-38h-448q0-106-75-181t-181-75-181 75-75 181h-448q-52 0-90 38t-38 90q50 42 91 88t85 119.500 74.500 158.500 50 206 19.500 260q0 152 117 282.500t307 158.500q-8 19-8 39 0 40 28 68t68 28 68-28 28-68q0-20-8-39 190-28 307-158.500t117-282.500q0-139 19.500-260t50-206 74.500-158.500 85-119.500 91-88z"/></svg>
<div class="sb" style="top:557.9px;letter-spacing:0.21px">Notifications</div>
<svg style="position:absolute;left:37px;top:610px;" width="26" height="26" viewBox="0 0 512 512" preserveAspectRatio="xMidYMid meet"><path fill="#c4996c" d="M195.1 9.5c3-14.8 16.1-25.5 31.3-25.5h59.8c15.2 0 28.3 10.7 31.3 25.5l14.5 70c14.1 6 27.3 13.7 39.3 22.8l67.8-22.5c14.4-4.8 30.2 1.2 37.8 14.4l29.9 51.8c7.6 13.2 4.9 29.8-6.5 39.9L447 233.3c.9 7.4 1.3 15 1.3 22.7s-.5 15.3-1.3 22.7l53.4 47.5c11.4 10.1 14 26.8 6.5 39.9L477 417.9c-7.6 13.1-23.4 19.2-37.8 14.4l-67.8-22.5c-12.1 9.1-25.3 16.7-39.3 22.8l-14.4 69.9c-3.1 14.9-16.2 25.5-31.3 25.5h-59.8c-15.2 0-28.3-10.7-31.3-25.5l-14.4-69.9c-14.1-6-27.2-13.7-39.3-22.8l-68.1 22.5c-14.4 4.8-30.2-1.2-37.8-14.4L5.8 366.1c-7.6-13.2-4.9-29.8 6.5-39.9l53.4-47.5c-.9-7.4-1.3-15-1.3-22.7s.5-15.3 1.3-22.7l-53.4-47.5C.9 175.7-1.7 159 5.8 145.9l29.9-51.8c7.6-13.2 23.4-19.2 37.8-14.4l67.8 22.5c12.1-9.1 25.3-16.7 39.3-22.8zM256.3 336a80 80 0 1 0-.6-160 80 80 0 1 0 .6 160"/></svg>
<div class="sb" style="top:639.9px;letter-spacing:0.05px">Settings</div>
</div>
<div class="a" style="left:963.5px;top:58px;width:288.5px;height:856px;background:#fff;box-shadow:-2px 0 5px rgba(0,0,0,.17)">
<div class="t tan" style="left:41.5px;top:15px;font-size:16.2px;-webkit-text-stroke:.6px #c4996c;letter-spacing:.05px">Read All</div>
<div class="t tan" style="left:175.8px;top:15px;font-size:16.2px;-webkit-text-stroke:.6px #c4996c;letter-spacing:.33px">Dismiss all</div>
<div class="a" style="left:0;top:46.6px;width:288.5px;height:1.2px;background:#a2a2a2;box-shadow:0 1px 1.5px rgba(0,0,0,.18)"></div>
<div class="n" style="top:54px;height:94.5px"><div class="yc" style="top:35.25px"><svg class="a" style="left:5.5px;top:6px" width="14.5" height="13.6" viewBox="0 0 32 30" preserveAspectRatio="none"><path fill="#2d2d2d" d="M0 30V8a8 8 0 0 1 16 0v7.2h13.4L32 23.4h-2.6V30H12V6H10.2v2.2H6.2V6H4.8v24z M6.2 11.1h4v2.2h-4z M6.2 16.2h4v2.1h-4z M6.2 21h4v2.1h-4z M6.2 25.8h4V30h-4z"/><path fill="#fdd400" d="M14.9 24.1h5.4v4.8h-5.4z M21.9 24.1h5.6v4.8h-5.6z"/></svg></div><div class="tx"><span style="letter-spacing:-0.145px"><u>S14 Wheat, 60Kbu,</u></span><br><span style="letter-spacing:0.234px"><u>(Aeration-Monitoring)</u>:</span><br><span style="letter-spacing:0.006px">Unusual Carbon Dioxide</span><br><span style="letter-spacing:0.18px">activity detected by</span><br><span style="letter-spacing:-0.036px"><b>4180E68B</b></span></div><svg class="a" style="left:248.6px;top:40.25px" width="14.8" height="14.8" viewBox="-10 -10 532 532"><path fill="#2b2b2b" stroke="#2b2b2b" stroke-width="38" d="M256 512a256 256 0 1 1 0-512 256 256 0 1 1 0 512m0-464a208 208 0 1 0 0 416 208 208 0 1 0 0-416m70.7 121.9c7.8-10.7 22.8-13.1 33.5-5.3s13.1 22.8 5.3 33.5l-122.1 168c-4.1 5.7-10.5 9.3-17.5 9.8s-13.9-2-18.8-6.9l-55.9-55.9c-9.4-9.4-9.4-24.6 0-33.9s24.6-9.4 33.9 0l36 36L326.7 170z"/></svg></div>
<div class="n" style="top:148.5px;height:76px"><div class="yc" style="top:26.0px"><svg class="a" style="left:5.5px;top:6px" width="14.5" height="13.6" viewBox="0 0 32 30" preserveAspectRatio="none"><path fill="#2d2d2d" d="M0 30V8a8 8 0 0 1 16 0v7.2h13.4L32 23.4h-2.6V30H12V6H10.2v2.2H6.2V6H4.8v24z M6.2 11.1h4v2.2h-4z M6.2 16.2h4v2.1h-4z M6.2 21h4v2.1h-4z M6.2 25.8h4V30h-4z"/><path fill="#fdd400" d="M14.9 24.1h5.4v4.8h-5.4z M21.9 24.1h5.6v4.8h-5.6z"/></svg></div><div class="tx"><span style="letter-spacing:-0.145px"><u>S14 Wheat, 60Kbu,</u></span><br><span style="letter-spacing:0.234px"><u>(Aeration-Monitoring)</u>:</span><br><span style="letter-spacing:0.22px">Analysis was successfully</span><br><span style="letter-spacing:0.22px">completed.</span></div><svg class="a" style="left:248.6px;top:31.0px" width="14.8" height="14.8" viewBox="-10 -10 532 532"><path fill="#2b2b2b" stroke="#2b2b2b" stroke-width="38" d="M256 512a256 256 0 1 1 0-512 256 256 0 1 1 0 512m0-464a208 208 0 1 0 0 416 208 208 0 1 0 0-416m70.7 121.9c7.8-10.7 22.8-13.1 33.5-5.3s13.1 22.8 5.3 33.5l-122.1 168c-4.1 5.7-10.5 9.3-17.5 9.8s-13.9-2-18.8-6.9l-55.9-55.9c-9.4-9.4-9.4-24.6 0-33.9s24.6-9.4 33.9 0l36 36L326.7 170z"/></svg></div>
<div class="n" style="top:224.5px;height:76px"><div class="yc" style="top:26.0px"><svg class="a" style="left:5.5px;top:6px" width="14.5" height="13.6" viewBox="0 0 32 30" preserveAspectRatio="none"><path fill="#2d2d2d" d="M0 30V8a8 8 0 0 1 16 0v7.2h13.4L32 23.4h-2.6V30H12V6H10.2v2.2H6.2V6H4.8v24z M6.2 11.1h4v2.2h-4z M6.2 16.2h4v2.1h-4z M6.2 21h4v2.1h-4z M6.2 25.8h4V30h-4z"/><path fill="#fdd400" d="M14.9 24.1h5.4v4.8h-5.4z M21.9 24.1h5.6v4.8h-5.6z"/></svg></div><div class="tx"><span style="letter-spacing:-0.145px"><u>S14 Wheat, 60Kbu,</u></span><br><span style="letter-spacing:0.234px"><u>(Aeration-Monitoring)</u>:</span><br><span style="letter-spacing:0.053px">Wheat, Whole Moisture</span><br><span style="letter-spacing:0.01px">Content - w.b. is under 11 %</span></div><svg class="a" style="left:248.6px;top:31.0px" width="14.8" height="14.8" viewBox="-10 -10 532 532"><path fill="#2b2b2b" stroke="#2b2b2b" stroke-width="38" d="M256 512a256 256 0 1 1 0-512 256 256 0 1 1 0 512m0-464a208 208 0 1 0 0 416 208 208 0 1 0 0-416m70.7 121.9c7.8-10.7 22.8-13.1 33.5-5.3s13.1 22.8 5.3 33.5l-122.1 168c-4.1 5.7-10.5 9.3-17.5 9.8s-13.9-2-18.8-6.9l-55.9-55.9c-9.4-9.4-9.4-24.6 0-33.9s24.6-9.4 33.9 0l36 36L326.7 170z"/></svg></div>
<div class="n" style="top:300.5px;height:94.5px"><div class="yc" style="top:35.25px"><svg class="a" style="left:5.5px;top:6px" width="14.5" height="13.6" viewBox="0 0 32 30" preserveAspectRatio="none"><path fill="#2d2d2d" d="M0 30V8a8 8 0 0 1 16 0v7.2h13.4L32 23.4h-2.6V30H12V6H10.2v2.2H6.2V6H4.8v24z M6.2 11.1h4v2.2h-4z M6.2 16.2h4v2.1h-4z M6.2 21h4v2.1h-4z M6.2 25.8h4V30h-4z"/><path fill="#fdd400" d="M14.9 24.1h5.4v4.8h-5.4z M21.9 24.1h5.6v4.8h-5.6z"/></svg></div><div class="tx"><span style="letter-spacing:-0.145px"><u>S14 Wheat, 60Kbu,</u></span><br><span style="letter-spacing:0.234px"><u>(Aeration-Monitoring)</u>:</span><br><span style="letter-spacing:0.006px">Unusual Carbon Dioxide</span><br><span style="letter-spacing:0.18px">activity detected by</span><br><span style="letter-spacing:-0.02px"><b>4180E6F7</b></span></div><svg class="a" style="left:248.6px;top:40.25px" width="14.8" height="14.8" viewBox="-10 -10 532 532"><path fill="#2b2b2b" stroke="#2b2b2b" stroke-width="38" d="M256 512a256 256 0 1 1 0-512 256 256 0 1 1 0 512m0-464a208 208 0 1 0 0 416 208 208 0 1 0 0-416m70.7 121.9c7.8-10.7 22.8-13.1 33.5-5.3s13.1 22.8 5.3 33.5l-122.1 168c-4.1 5.7-10.5 9.3-17.5 9.8s-13.9-2-18.8-6.9l-55.9-55.9c-9.4-9.4-9.4-24.6 0-33.9s24.6-9.4 33.9 0l36 36L326.7 170z"/></svg></div>
<div class="n" style="top:395.0px;height:76px"><div class="yc" style="top:26.0px"><svg class="a" style="left:5.5px;top:6px" width="14.5" height="13.6" viewBox="0 0 32 30" preserveAspectRatio="none"><path fill="#2d2d2d" d="M0 30V8a8 8 0 0 1 16 0v7.2h13.4L32 23.4h-2.6V30H12V6H10.2v2.2H6.2V6H4.8v24z M6.2 11.1h4v2.2h-4z M6.2 16.2h4v2.1h-4z M6.2 21h4v2.1h-4z M6.2 25.8h4V30h-4z"/><path fill="#fdd400" d="M14.9 24.1h5.4v4.8h-5.4z M21.9 24.1h5.6v4.8h-5.6z"/></svg></div><div class="tx"><span style="letter-spacing:-0.145px"><u>S14 Wheat, 60Kbu,</u></span><br><span style="letter-spacing:0.234px"><u>(Aeration-Monitoring)</u>:</span><br><span style="letter-spacing:0.053px">Wheat, Whole Moisture</span><br><span style="letter-spacing:0.01px">Content - w.b. is under 11 %</span></div><svg class="a" style="left:248.6px;top:31.0px" width="14.8" height="14.8" viewBox="-10 -10 532 532"><path fill="#2b2b2b" stroke="#2b2b2b" stroke-width="38" d="M256 512a256 256 0 1 1 0-512 256 256 0 1 1 0 512m0-464a208 208 0 1 0 0 416 208 208 0 1 0 0-416m70.7 121.9c7.8-10.7 22.8-13.1 33.5-5.3s13.1 22.8 5.3 33.5l-122.1 168c-4.1 5.7-10.5 9.3-17.5 9.8s-13.9-2-18.8-6.9l-55.9-55.9c-9.4-9.4-9.4-24.6 0-33.9s24.6-9.4 33.9 0l36 36L326.7 170z"/></svg></div>
<div class="n" style="top:471.0px;height:76px"><div class="yc" style="top:26.0px"><svg class="a" style="left:5.5px;top:6px" width="14.5" height="13.6" viewBox="0 0 32 30" preserveAspectRatio="none"><path fill="#2d2d2d" d="M0 30V8a8 8 0 0 1 16 0v7.2h13.4L32 23.4h-2.6V30H12V6H10.2v2.2H6.2V6H4.8v24z M6.2 11.1h4v2.2h-4z M6.2 16.2h4v2.1h-4z M6.2 21h4v2.1h-4z M6.2 25.8h4V30h-4z"/><path fill="#fdd400" d="M14.9 24.1h5.4v4.8h-5.4z M21.9 24.1h5.6v4.8h-5.6z"/></svg></div><div class="tx"><span style="letter-spacing:-0.145px"><u>S14 Wheat, 60Kbu,</u></span><br><span style="letter-spacing:0.234px"><u>(Aeration-Monitoring)</u>:</span><br><span style="letter-spacing:0.053px">Wheat, Whole Moisture</span><br><span style="letter-spacing:0.01px">Content - w.b. is under 11 %</span></div><svg class="a" style="left:248.6px;top:31.0px" width="14.8" height="14.8" viewBox="-10 -10 532 532"><path fill="#2b2b2b" stroke="#2b2b2b" stroke-width="38" d="M256 512a256 256 0 1 1 0-512 256 256 0 1 1 0 512m0-464a208 208 0 1 0 0 416 208 208 0 1 0 0-416m70.7 121.9c7.8-10.7 22.8-13.1 33.5-5.3s13.1 22.8 5.3 33.5l-122.1 168c-4.1 5.7-10.5 9.3-17.5 9.8s-13.9-2-18.8-6.9l-55.9-55.9c-9.4-9.4-9.4-24.6 0-33.9s24.6-9.4 33.9 0l36 36L326.7 170z"/></svg></div>
<div class="n" style="top:547.0px;height:76px"><div class="yc" style="top:26.0px"><svg class="a" style="left:5.5px;top:6px" width="14.5" height="13.6" viewBox="0 0 32 30" preserveAspectRatio="none"><path fill="#2d2d2d" d="M0 30V8a8 8 0 0 1 16 0v7.2h13.4L32 23.4h-2.6V30H12V6H10.2v2.2H6.2V6H4.8v24z M6.2 11.1h4v2.2h-4z M6.2 16.2h4v2.1h-4z M6.2 21h4v2.1h-4z M6.2 25.8h4V30h-4z"/><path fill="#fdd400" d="M14.9 24.1h5.4v4.8h-5.4z M21.9 24.1h5.6v4.8h-5.6z"/></svg></div><div class="tx"><span style="letter-spacing:-0.145px"><u>S14 Wheat, 60Kbu,</u></span><br><span style="letter-spacing:0.234px"><u>(Aeration-Monitoring)</u>:</span><br><span style="letter-spacing:0.005px">Wheat, Whole Product</span><br><span style="letter-spacing:0.068px">Temperature is over 25 °C</span></div><svg class="a" style="left:248.6px;top:31.0px" width="14.8" height="14.8" viewBox="-10 -10 532 532"><path fill="#2b2b2b" stroke="#2b2b2b" stroke-width="38" d="M256 512a256 256 0 1 1 0-512 256 256 0 1 1 0 512m0-464a208 208 0 1 0 0 416 208 208 0 1 0 0-416m70.7 121.9c7.8-10.7 22.8-13.1 33.5-5.3s13.1 22.8 5.3 33.5l-122.1 168c-4.1 5.7-10.5 9.3-17.5 9.8s-13.9-2-18.8-6.9l-55.9-55.9c-9.4-9.4-9.4-24.6 0-33.9s24.6-9.4 33.9 0l36 36L326.7 170z"/></svg></div>
<div class="n" style="top:623.0px;height:76px"><div class="yc" style="top:26.0px"><svg class="a" style="left:5.5px;top:6px" width="14.5" height="13.6" viewBox="0 0 32 30" preserveAspectRatio="none"><path fill="#2d2d2d" d="M0 30V8a8 8 0 0 1 16 0v7.2h13.4L32 23.4h-2.6V30H12V6H10.2v2.2H6.2V6H4.8v24z M6.2 11.1h4v2.2h-4z M6.2 16.2h4v2.1h-4z M6.2 21h4v2.1h-4z M6.2 25.8h4V30h-4z"/><path fill="#fdd400" d="M14.9 24.1h5.4v4.8h-5.4z M21.9 24.1h5.6v4.8h-5.6z"/></svg></div><div class="tx"><span style="letter-spacing:-0.034px"><u>Wheat, 60Kbu, (Aeration-</u></span><br><span style="letter-spacing:0.096px"><u>Monitoring)</u>: Wheat, Whole</span><br><span style="letter-spacing:0.12px">Moisture Content - w.b. is</span><br><span style="letter-spacing:-0.05px">under 11 %</span></div><svg class="a" style="left:248.6px;top:31.0px" width="14.8" height="14.8" viewBox="-10 -10 532 532"><path fill="#2b2b2b" stroke="#2b2b2b" stroke-width="38" d="M256 512a256 256 0 1 1 0-512 256 256 0 1 1 0 512m0-464a208 208 0 1 0 0 416 208 208 0 1 0 0-416m70.7 121.9c7.8-10.7 22.8-13.1 33.5-5.3s13.1 22.8 5.3 33.5l-122.1 168c-4.1 5.7-10.5 9.3-17.5 9.8s-13.9-2-18.8-6.9l-55.9-55.9c-9.4-9.4-9.4-24.6 0-33.9s24.6-9.4 33.9 0l36 36L326.7 170z"/></svg></div>
<div class="a" style="left:216.3px;top:795px;width:53.8px;height:53.8px;border-radius:50%;background:#3f3f3f;box-shadow:0 2px 10px rgba(0,0,0,.18)"></div>
<svg class="a" style="left:230.300px;top:808.2px" width="26.3" height="28.4" viewBox="0 0 27 29"><path fill="#fff" d="M3 0h20.500a3 3 0 0 1 3 3V28.500L18.500 25H3a3 3 0 0 1-3-3V3a3 3 0 0 1 3-3z"/><path d="M4.200 17.500c5 4.300 13.200 4.300 18.200 0" fill="none" stroke="#3f3f3f" stroke-width="1.300"/></svg>
</div>
<div class="a" style="left:5px;top:9px;width:1247px;height:49px;background:#3a3a3c;box-shadow:0 1px 2.5px rgba(0,0,0,.45)">
<svg class="a" style="left:0;top:0" width="110" height="49" viewBox="0 0 110 49" fill="none" stroke="#c4996c" stroke-width="1.05" stroke-linecap="round" stroke-linejoin="round">
<path d="M26.0 28.6 Q26.6 31.4 28.3 31.3 Q30.1 31.1 31.8 29.7 Q33.5 28.3 35.1 26.7 Q36.7 25.1 37.6 25.9 Q38.6 26.7 37.3 28.6 Q36.0 30.5 35.1 32.5 Q34.2 34.6 33.5 35.5 L32.9 36.4"/>
<path d="M38.9 27.3 Q35.7 32.7 37.0 33.9 Q38.2 35.2 41.1 33.3 Q43.9 31.4 45.8 29.2 Q47.7 27.0 48.6 25.4 Q49.6 23.9 49.4 22.3 L49.2 20.7"/>
<path d="M39.5 27.0 Q44.5 26.1 46.1 26.4 Q47.7 26.7 49.6 28.1 Q51.4 29.5 52.9 31.7 Q54.3 33.9 54.7 35.0 L55.2 36.1"/>
<path d="M37.6 30.8 Q42.0 29.2 44.2 29.5 Q46.4 29.8 48.3 31.3 Q50.2 32.7 52.4 34.2 L54.6 35.8"/>
<ellipse cx="47.2" cy="16.9" rx="2.1" ry="3.3" transform="rotate(8 47.2 16.9)"/>
<path d="M40.1 22.9 Q44.5 21.7 47.0 21.9 Q49.6 22.1 47.4 23.0 Q45.2 23.9 42.6 23.4 L40.1 22.9"/>
<path d="M49.6 19.3 Q55.2 18.7 58.5 18.1 L61.8 17.5"/>
<path d="M54.3 11.3 Q60.3 13.2 61.5 15.4 Q62.8 17.6 61.8 20.4 Q60.9 23.2 59.2 24.5 L57.4 25.8"/>
<path d="M54.9 11.4 Q55.2 18.5 56.3 22.0 L57.4 25.4"/>
</svg>
<svg class="a" style="left:65px;top:24px" width="40" height="12" viewBox="0 0 40 12"><path d="M1.400 6 L3.600 3.900 V4.800 H30 V7.200 H3.600 V8.100z" fill="#c4996c"/></svg>
<div class="t tan" style="left:74.3px;top:10.6px;font-size:30.5px;transform:scaleX(.872);letter-spacing:0;-webkit-text-stroke:.55px #c4996c">Centaur</div>
<svg class="a" style="left:1113px;top:15.4px" width="16" height="17.2" viewBox="64 -1536 1664 1792" preserveAspectRatio="none"><path transform="scale(1,-1)" fill="#c4996c" d="M912-160q0 16-16 16-59 0-101.500 42.500t-42.500 101.500q0 16-16 16t-16-16q0-73 51.500-124.500t124.500-51.500q16 0 16 16zM1728 128q0-52-38-90t-90-38h-448q0-106-75-181t-181-75-181 75-75 181h-448q-52 0-90 38t-38 90q50 42 91 88t85 119.500 74.500 158.500 50 206 19.500 260q0 152 117 282.500t307 158.500q-8 19-8 39 0 40 28 68t68 28 68-28 28-68q0-20-8-39 190-28 307-158.500t117-282.500q0-139 19.500-260t50-206 74.500-158.500 85-119.500 91-88z"/></svg>
<div class="a" style="left:1119px;top:5.500px;width:18px;height:18px;border-radius:50%;background:#ee2b37"></div>
<div class="t" style="left:1119px;top:8.500px;font-size:11.800px;font-weight:700;color:#fff;letter-spacing:.1px">817</div>
<svg class="a" style="left:1159px;top:15.4px" width="17.4" height="17.4" viewBox="0 0 17.4 17.4"><defs><clipPath id="uc"><circle cx="8.7" cy="8.7" r="7.4"/></clipPath></defs><circle cx="8.7" cy="8.7" r="7.9" fill="none" stroke="#c4996c" stroke-width="1.5"/><g clip-path="url(#uc)" fill="#c4996c"><circle cx="8.7" cy="6.7" r="3.1"/><path d="M2.600 17.400c0-4.500 2.200-6.600 3.800-6.900.7.500 1.400.800 2.300.800s1.600-.3 2.300-.8c1.600.3 3.800 2.400 3.800 6.900z"/></g></svg>
<div class="t tan" style="left:1183px;top:17.500px;font-size:12px;letter-spacing:-.25px;-webkit-text-stroke:.4px #c4996c">USDEMO</div>
</div>
<div class="a" style="left:0;top:0;width:1273px;height:8px;background:#2d2d2d"></div>
<div class="a" style="left:5px;top:8px;width:1264px;height:1px;background:#000"></div>
<div class="a" style="left:0;top:0;width:5px;height:933px;background:#2c2c2c"></div>
<div class="a" style="left:3.500px;top:0;width:1.500px;height:914px;background:#252525"></div>
<div class="a" style="left:0;top:467px;width:4px;height:92px;background:#e8e8e8"></div>
<div class="a" style="left:1252px;top:9px;width:17px;height:905px;background:#f1f1f1"></div>
<div class="a" style="left:1254px;top:26px;width:13px;height:695px;background:#c1c1c1"></div>
<svg class="a" style="left:1256.500px;top:16px" width="8" height="5" viewBox="0 0 8 5"><path d="M0 4.500 4 0l4 4.500z" fill="#a3a3a3"/></svg>
<div class="a" style="left:1268px;top:9px;width:1px;height:924px;background:#fff"></div>
<div class="a" style="left:1269px;top:0;width:2px;height:926.500px;background:#626262"></div>
<div class="a" style="left:1271px;top:0;width:2px;height:933px;background:#c6c6c6"></div>
<div class="a" style="left:0;top:914px;width:1267px;height:19px;background:#222"></div>
<div class="a" style="left:1267px;top:914px;width:2px;height:19px;background:#fff"></div>
<div class="a" style="left:1267px;top:926.500px;width:6px;height:7px;background:#f4f4f4"></div>
<div class="t" style="left:1221.500px;top:918.500px;font-size:11.500px;color:#fff;letter-spacing:-.55px">17:00</div>
</body></html>
